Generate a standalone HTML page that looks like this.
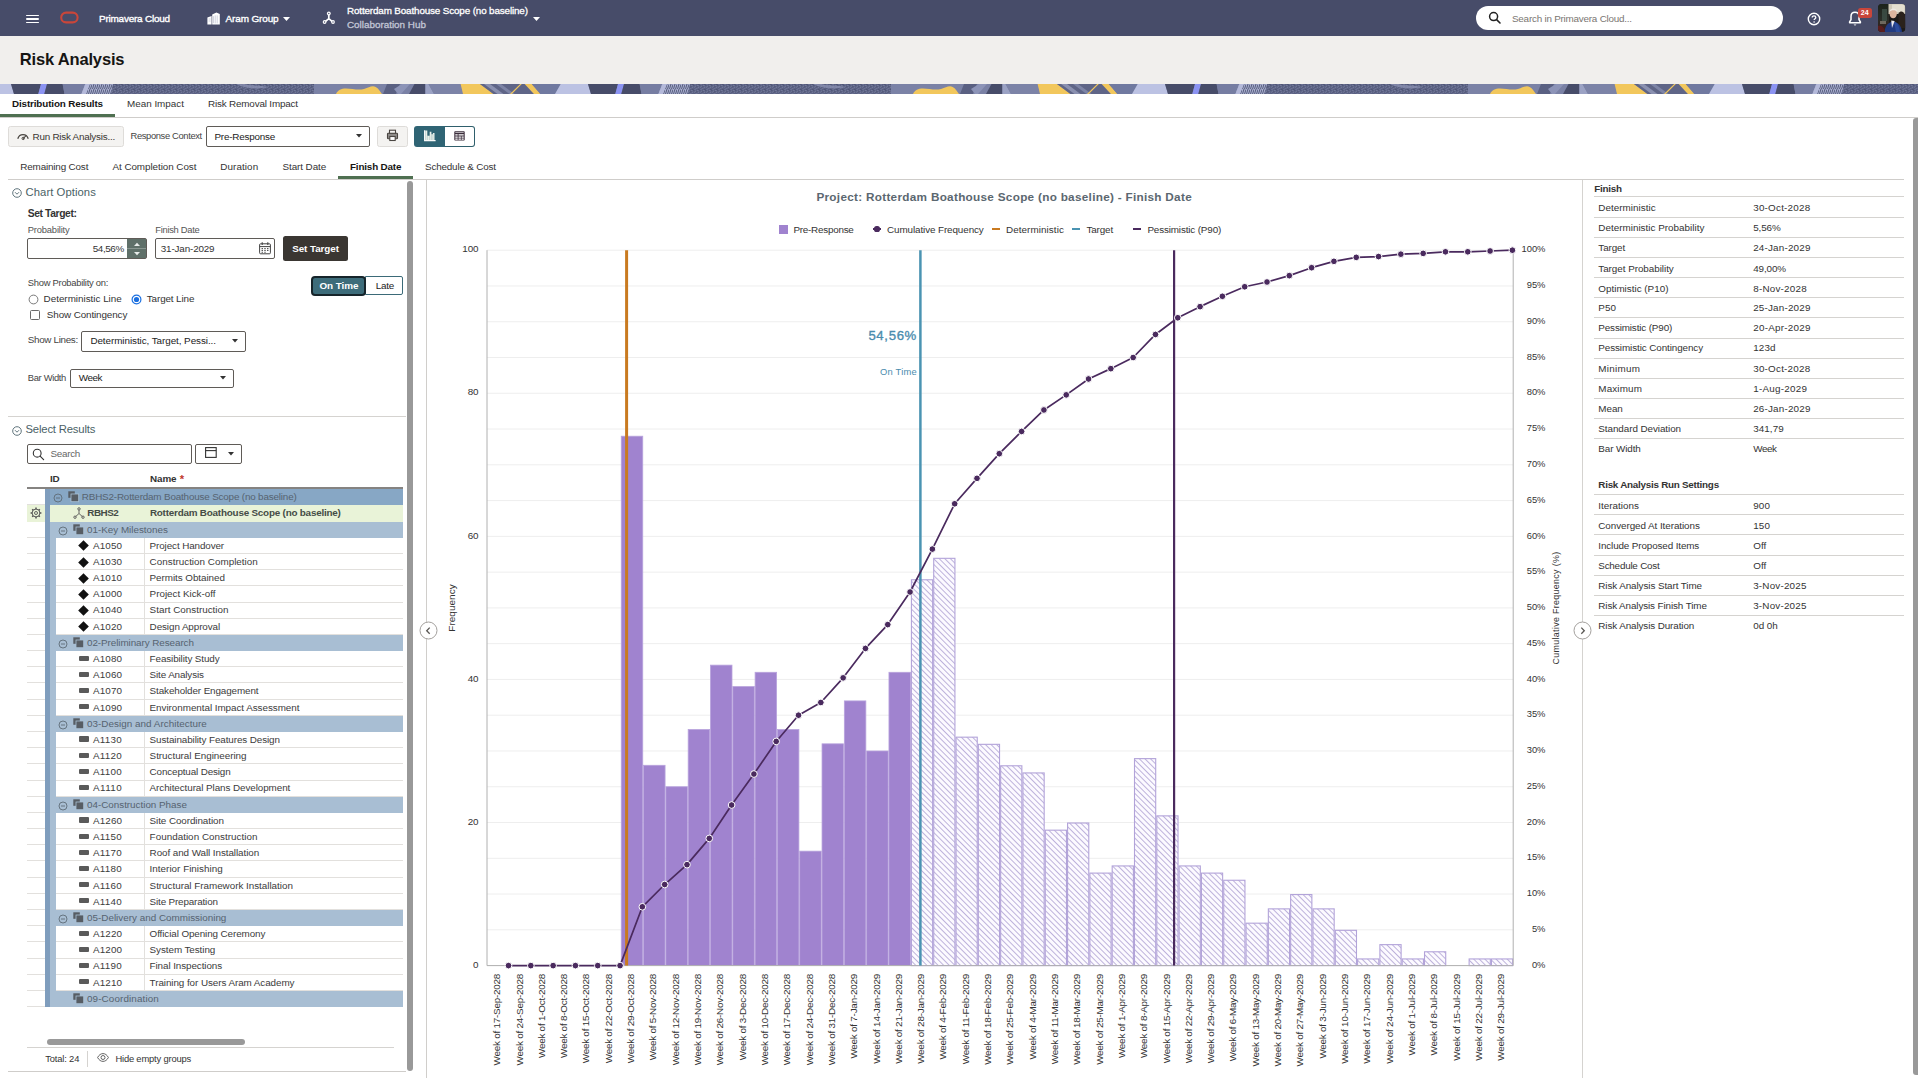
<!DOCTYPE html>
<html><head><meta charset="utf-8"><title>Risk Analysis</title>
<style>
html,body{margin:0;padding:0;}
body{width:1918px;height:1078px;overflow:hidden;background:#fff;font-family:"Liberation Sans",sans-serif;position:relative;}
.t{position:absolute;white-space:nowrap;display:block;}
.b{position:absolute;box-sizing:border-box;}
svg{position:absolute;overflow:visible;}
</style></head><body>
<div class="b" style="left:0.00px;top:0.00px;width:1918.00px;height:36.00px;background:#474c69;"></div>
<div class="b" style="left:26.00px;top:14.50px;width:12.50px;height:1.60px;background:#fff;border-radius:1px;"></div>
<div class="b" style="left:26.00px;top:18.20px;width:12.50px;height:1.60px;background:#fff;border-radius:1px;"></div>
<div class="b" style="left:26.00px;top:21.90px;width:12.50px;height:1.60px;background:#fff;border-radius:1px;"></div>
<svg style="left:58px;top:10px" width="24" height="16" viewBox="0 0 24 16"><rect x="3.2" y="2.6" width="16.4" height="9.8" rx="4.9" fill="none" stroke="#c9463a" stroke-width="2.1"/></svg>
<span class="t" style="left:99.00px;top:11.55px;font-size:9.96px;letter-spacing:-0.214px;color:#fff;line-height:14px;-webkit-text-stroke:0.35px #fff;">Primavera Cloud</span>
<svg style="left:206.500px;top:11.500px" width="13" height="13" viewBox="0 0 13 13"><path d="M0.400 12.400V5.600L4.600 4V12.400zM5.200 12.400V2.600L9.400 0.400L12.800 2V12.400z" fill="#fff"/><path d="M1.600 7h2M1.600 9h2M6.400 4.200v7M8.200 3.400v8M10.200 3.400v8" stroke="#b9bdd0" stroke-width="0.700"/></svg>
<span class="t" style="left:225.60px;top:11.55px;font-size:9.96px;letter-spacing:-0.127px;color:#fff;line-height:14px;-webkit-text-stroke:0.35px #fff;">Aram Group</span>
<svg style="left:283px;top:16.5px" width="7" height="4" viewBox="0 0 7 4"><path d="M0 0h7L3.5 4z" fill="#fff"/></svg>
<svg style="left:322px;top:10.500px" width="14" height="14" viewBox="0 0 14 14"><g fill="none" stroke="#fff" stroke-width="1.700" stroke-linecap="round"><path d="M6.800 3.500V7.600M6.800 7.600L3 10.800M6.800 7.600L10.600 10.800"/></g><circle cx="6.800" cy="2.500" r="1.900" fill="#fff"/><circle cx="2.600" cy="11" r="1.900" fill="#fff"/><circle cx="11" cy="11" r="1.900" fill="#fff"/><circle cx="2.600" cy="11" r="0.700" fill="#474c69"/><circle cx="11" cy="11" r="0.700" fill="#474c69"/><circle cx="6.800" cy="2.500" r="0.700" fill="#474c69"/></svg>
<span class="t" style="left:347.00px;top:4.35px;font-size:9.87px;letter-spacing:-0.142px;color:#fff;line-height:14px;-webkit-text-stroke:0.3px #fff;">Rotterdam Boathouse Scope (no baseline)</span>
<span class="t" style="left:347.00px;top:18.15px;font-size:9.87px;letter-spacing:-0.001px;color:#c3c6d6;line-height:14px;-webkit-text-stroke:0.3px #c3c6d6;">Collaboration Hub</span>
<svg style="left:533px;top:16.5px" width="7" height="4" viewBox="0 0 7 4"><path d="M0 0h7L3.5 4z" fill="#fff"/></svg>
<div class="b" style="left:1476.00px;top:6.00px;width:307.00px;height:24.00px;background:#fff;border-radius:12px;"></div>
<svg style="left:1488px;top:11px" width="14" height="14" viewBox="0 0 14 14"><circle cx="5.6" cy="5.6" r="4" fill="none" stroke="#222" stroke-width="1.5"/><path d="M8.6 8.6L12 12" stroke="#222" stroke-width="1.6" stroke-linecap="round"/></svg>
<span class="t" style="left:1512.00px;top:11.75px;font-size:9.87px;letter-spacing:-0.221px;color:#7a7672;line-height:14px;">Search in Primavera Cloud...</span>
<svg style="left:1806px;top:11px" width="16" height="16" viewBox="0 0 16 16"><circle cx="8" cy="8" r="5.7" fill="none" stroke="#fff" stroke-width="1.4"/><path d="M6.2 6.6c0-1.1 0.8-1.8 1.8-1.8s1.8 0.7 1.8 1.6c0 1.2-1.7 1.3-1.7 2.7" fill="none" stroke="#fff" stroke-width="1.3"/><circle cx="8.1" cy="11" r="0.8" fill="#fff"/></svg>
<svg style="left:1847px;top:10px" width="16" height="18" viewBox="0 0 16 18"><path d="M8 2.2c-2.5 0-4 1.8-4 4.2v3.2L2.6 12v0.8h10.8V12L12 9.600V6.400c0-2.400-1.500-4.200-4-4.200z" fill="none" stroke="#fff" stroke-width="1.5" stroke-linejoin="round"/><path d="M6.6 14.400c0.300 0.700 0.800 1 1.400 1s1.100-0.300 1.400-1z" fill="#fff"/></svg>
<div class="b" style="left:1858.00px;top:8.00px;width:13.50px;height:9.50px;background:#c9463a;border-radius:2.5px;"></div>
<span class="t" style="left:1860.74px;top:8.05px;font-size:7.05px;letter-spacing:0.042px;color:#fff;line-height:10px;font-weight:bold;">24</span>
<svg style="left:1878px;top:4px" width="27.400" height="28" viewBox="0 0 27.400 28"><defs><clipPath id="av"><rect width="27.400" height="28" rx="3.800"/></clipPath><linearGradient id="avl" x1="0" y1="0" x2="0" y2="1"><stop offset="0" stop-color="#1d241c"/><stop offset="0.550" stop-color="#2a2d27"/><stop offset="1" stop-color="#3a1a18"/></linearGradient></defs><g clip-path="url(#av)"><rect width="27.400" height="28" fill="#1c1a18"/><rect x="0" y="0" width="11" height="28" fill="url(#avl)"/><rect x="4" y="5" width="5" height="12" fill="#3f5148" opacity="0.800"/><rect x="2" y="17" width="6" height="3" fill="#8a8478" opacity="0.700"/><path d="M10.500 0H27.400V10H10.500z" fill="#cfc9b8"/><path d="M14 0.500H26.500V8H14z" fill="#e4dfd0"/><path d="M20.500 9c2-2.500 5-2 6 1c0.800 3 0.900 8 0.900 14h-7z" fill="#2a221c"/><ellipse cx="15.200" cy="9.600" rx="3.700" ry="4.700" fill="#dcb59e"/><path d="M11.300 8.200c0.300-4.600 7.400-5 8-0.400c-1.400-2-6.200-2.300-8 0.400z" fill="#eee9e2"/><path d="M6.500 28c0.500-6 3.500-9.500 8.200-10.500c5 0.500 8.800 4 9.300 10.500z" fill="#203a80"/><path d="M16 17.500c3 1 5 3 6 10.500h-4z" fill="#2a4b9c"/><path d="M13.200 16.600l0.800 7.400l2.600-7z" fill="#e9e9ee"/><path d="M0 22c3-1 6 0 7 6H0z" fill="#5a1d1d"/></g></svg>
<div class="b" style="left:0.00px;top:36.00px;width:1918.00px;height:48.00px;background:#f1efed;"></div>
<span class="t" style="left:19.80px;top:49.35px;font-size:16.54px;letter-spacing:-0.183px;color:#161513;line-height:22px;font-weight:bold;">Risk Analysis</span>
<svg style="left:0;top:84px" width="1918" height="10" viewBox="0 0 1918 10"><defs><pattern id="texd" width="6" height="5" patternUnits="userSpaceOnUse"><rect width="6" height="5" fill="#585e80"/><path d="M0 1.200l2.200 1M2.800 3.600l2.200-1.400M3.400 0.400l1.800 0.800M0.400 4.200l1.600-0.800M4.600 4.600l1.400-0.600" stroke="#8086a8" stroke-width="0.700"/><path d="M1.500 0l1 1.500M5 2.500l1 1.200" stroke="#3f4464" stroke-width="0.600"/></pattern><pattern id="texl" width="4" height="5" patternUnits="userSpaceOnUse"><rect width="4" height="5" fill="#a9aed0"/><path d="M0.500 5L2 0M2.500 5L4 0.500" stroke="#4d5373" stroke-width="0.900"/></pattern><g id="bn"><rect x="0" y="0" width="577" height="10" fill="#7a81a5"/><path d="M0 0H11L14 10H0z" fill="#bcc2e3"/><path d="M11 0H41L38.300 10H14z" fill="#474c69"/><path d="M41 0H47L44.300 10H38.300z" fill="#8b93f2"/><path d="M47 0H62.600L64.500 10H44.300z" fill="#474c69"/><path d="M62.600 0H85.300L81.400 10H64.500z" fill="#767da2"/><path d="M85.300 0H113L111 10H81.400z" fill="url(#texl)"/><path d="M85.300 0L81.400 10H86L90 0z" fill="#b4b9da"/><path d="M113 0H314V10H111z" fill="url(#texd)"/><path d="M236 0C244 4 256 6 268 3C262 1 250 2 244 0z" fill="#8c92b3" opacity="0.750"/><path d="M314 0H387V10H314z" fill="#7b82a6"/><path d="M336 10C338 6 341 4.500 346 4.500C352 4.500 358 6.500 364 5C368 4 370 2.300 373 2.300C377 2.300 379 6 382 10z" fill="#f2c75c"/><path d="M387 0H400L396 10H383z" fill="#5a6082"/><path d="M394 5L402 0H410L401 10H398z" fill="#8d94b8"/><path d="M414.500 0H425.400V10H409z" fill="#474c69"/><path d="M425.400 0H428.500L434 10H425.400z" fill="#9ba2c4"/><path d="M428.500 0H460.600L463 10H434z" fill="#7c83a7"/><path d="M460.600 0H480L493.500 10H463z" fill="#f2c75c"/><path d="M480 0H524.700L534 10H493.500z" fill="#5f6587"/><path d="M484 0H490L503.500 10H497.500z" fill="#8a90b0"/><path d="M496 0H501L514.500 10H509.500z" fill="#7d84a6"/><path d="M510 10L520.200 0H521.800L511.800 10z" fill="#f2c75c"/><path d="M524.700 0H531.800L540.400 10H534z" fill="#f2c75c"/><path d="M531.800 0H560.700L555 10H540.400z" fill="#7079a0"/><path d="M560.700 0H577V10H555z" fill="#bcc2e3"/></g></defs><use href="#bn" x="0"/><use href="#bn" x="577"/><use href="#bn" x="1154"/><use href="#bn" x="1731"/></svg>
<div class="b" style="left:0.00px;top:117.00px;width:1918.00px;height:1.00px;background:#cfcdca;"></div>
<div class="b" style="left:0.00px;top:114.00px;width:115.00px;height:3.00px;background:#4f7051;"></div>
<span class="t" style="left:12.00px;top:97.25px;font-size:9.87px;letter-spacing:-0.139px;color:#161513;line-height:14px;font-weight:bold;">Distribution Results</span>
<span class="t" style="left:127.00px;top:97.25px;font-size:9.87px;letter-spacing:-0.005px;color:#333;line-height:14px;">Mean Impact</span>
<span class="t" style="left:208.00px;top:97.25px;font-size:9.87px;letter-spacing:-0.171px;color:#333;line-height:14px;">Risk Removal Impact</span>
<div class="b" style="left:1913.00px;top:118.00px;width:5.00px;height:957.00px;background:#999;border-radius:3px 0 0 3px;"></div>
<div class="b" style="left:8.00px;top:126.00px;width:115.50px;height:20.50px;background:#f4f3f1;border:1px solid #dedcd9;border-radius:2.5px;"></div>
<svg style="left:17.300px;top:130.500px" width="12" height="10" viewBox="0 0 12 10"><path d="M1 7.300A5.200 5.200 0 0 1 11 7.300" fill="none" stroke="#4a4642" stroke-width="1.300" stroke-linecap="round"/><path d="M6.300 7.300L8.600 5.200" stroke="#4a4642" stroke-width="1.100" stroke-linecap="round"/><circle cx="6.200" cy="7.400" r="1.200" fill="none" stroke="#4a4642" stroke-width="1"/></svg>
<span class="t" style="left:32.50px;top:129.75px;font-size:9.87px;letter-spacing:-0.236px;color:#3a3632;line-height:14px;">Run Risk Analysis...</span>
<span class="t" style="left:130.50px;top:129.25px;font-size:9.40px;letter-spacing:-0.365px;color:#444;line-height:14px;">Response Context</span>
<div class="b" style="left:206.00px;top:126.00px;width:163.50px;height:20.50px;background:#fff;border:1px solid #5f5b57;border-radius:2px;"></div>
<span class="t" style="left:214.50px;top:130.25px;font-size:9.87px;letter-spacing:-0.216px;color:#222;line-height:14px;">Pre-Response</span>
<svg style="left:355.500px;top:134px" width="6" height="3.500" viewBox="0 0 6 3.500"><path d="M0 0h6L3 3.500z" fill="#333"/></svg>
<div class="b" style="left:377.20px;top:126.00px;width:30.40px;height:20.60px;background:#f4f3f1;border:1px solid #dedcd9;border-radius:2.5px;"></div>
<svg style="left:386px;top:129.300px" width="13" height="13" viewBox="0 0 13 13"><rect x="1.500" y="4.300" width="10" height="5.400" rx="0.800" fill="#8f8c89" stroke="#4a4642" stroke-width="1.100"/><rect x="3.500" y="1.200" width="6" height="3.100" fill="#f4f3f1" stroke="#4a4642" stroke-width="1.100"/><rect x="3.800" y="7.500" width="5.400" height="4" fill="#fff" stroke="#4a4642" stroke-width="1.100"/></svg>
<div class="b" style="left:414.00px;top:126.00px;width:30.70px;height:20.80px;background:#2f6474;border-radius:3px 0 0 3px;"></div>
<svg style="left:423.600px;top:129.800px" width="12" height="12" viewBox="0 0 12 12"><path d="M0.600 0.300V10.600H11.600" fill="none" stroke="#fff" stroke-width="1.100"/><path d="M1.200 0.600H3.300V5.800H5.700V1.700H7.400V4.200H8.900V3H10.500V10.200H1.200z" fill="#e9f0ea"/><path d="M3.300 5.800V10M5.700 5.800V10M7.400 4.200V10M8.900 4.200V10" stroke="#9fb9b8" stroke-width="0.500"/></svg>
<div class="b" style="left:444.70px;top:126.00px;width:30.20px;height:20.80px;background:#fff;border:1px solid #2f5f6c;border-left:none;border-radius:0 3px 3px 0;"></div>
<svg style="left:453.800px;top:130.700px" width="11" height="10" viewBox="0 0 11 10"><rect x="0.300" y="0.300" width="10.400" height="9.200" rx="0.800" fill="#3a2c3a"/><path d="M1.300 3.300h2.400v1.300h-2.400zM4.500 3.300h5.200v1.300h-5.200zM1.300 5.400h2.400v1.300h-2.400zM4.500 5.400h2.400v1.300h-2.400zM7.600 5.400h2.100v1.300h-2.100zM1.300 7.500h2.400v1.200h-2.400zM4.500 7.500h2.400v1.200h-2.400zM7.600 7.500h2.100v1.200h-2.100z" fill="#fff"/><path d="M1.300 1.500h8.400" stroke="#fff" stroke-width="0.600"/></svg>
<div class="b" style="left:8.00px;top:179.00px;width:1896.00px;height:1.00px;background:#cfcdca;"></div>
<div class="b" style="left:338.00px;top:176.20px;width:75.00px;height:3.00px;background:#4f7051;"></div>
<span class="t" style="left:20.30px;top:160.25px;font-size:9.87px;letter-spacing:-0.159px;color:#333;line-height:14px;">Remaining Cost</span>
<span class="t" style="left:112.50px;top:160.25px;font-size:9.87px;letter-spacing:-0.057px;color:#333;line-height:14px;">At Completion Cost</span>
<span class="t" style="left:220.30px;top:160.25px;font-size:9.87px;letter-spacing:0.087px;color:#333;line-height:14px;">Duration</span>
<span class="t" style="left:282.50px;top:160.25px;font-size:9.87px;letter-spacing:-0.074px;color:#333;line-height:14px;">Start Date</span>
<span class="t" style="left:350.00px;top:160.25px;font-size:9.87px;letter-spacing:-0.172px;color:#161513;line-height:14px;font-weight:bold;">Finish Date</span>
<span class="t" style="left:425.00px;top:160.25px;font-size:9.87px;letter-spacing:-0.168px;color:#333;line-height:14px;">Schedule &amp; Cost</span>
<div class="b" style="left:407.30px;top:181.00px;width:5.50px;height:890.00px;background:#999;border-radius:3px;"></div>
<div class="b" style="left:8.00px;top:1071.00px;width:398.00px;height:1.00px;background:#cfcdca;"></div>
<div class="b" style="left:426.30px;top:180.00px;width:1.00px;height:898.00px;background:#d0cecb;"></div>
<svg style="left:418.700px;top:621.400px" width="19" height="19" viewBox="0 0 19 19"><circle cx="9.500" cy="9.500" r="8.500" fill="#fff" stroke="#a3a09d" stroke-width="1"/><path d="M10.700 6.600L7.700 9.700L10.700 12.800" fill="none" stroke="#5a5754" stroke-width="1.300"/></svg>
<svg style="left:12.00px;top:187.70px" width="10" height="10" viewBox="0 0 10 10"><circle cx="5" cy="5" r="4.300" fill="none" stroke="#50666f" stroke-width="0.900"/><path d="M3 4.200L5 6.200L7 4.200" fill="none" stroke="#50666f" stroke-width="0.900"/></svg>
<span class="t" style="left:25.50px;top:184.00px;font-size:11.28px;letter-spacing:0.070px;color:#4a5f66;line-height:16px;">Chart Options</span>
<span class="t" style="left:27.80px;top:207.30px;font-size:10.34px;letter-spacing:-0.404px;color:#333;line-height:14px;font-weight:bold;">Set Target:</span>
<span class="t" style="left:27.80px;top:222.90px;font-size:9.40px;letter-spacing:-0.190px;color:#555;line-height:14px;">Probability</span>
<span class="t" style="left:155.30px;top:222.90px;font-size:9.40px;letter-spacing:-0.304px;color:#555;line-height:14px;">Finish Date</span>
<div class="b" style="left:27.00px;top:238.20px;width:120.00px;height:20.50px;background:#fff;border:1px solid #5f5b57;border-radius:2px;"></div>
<div class="b" style="left:126.50px;top:239.00px;width:19.70px;height:18.90px;background:#5f7069;"></div>
<div class="b" style="left:126.50px;top:248.00px;width:19.70px;height:1.00px;background:#8a9791;"></div>
<svg style="left:133.500px;top:241.500px" width="6" height="14" viewBox="0 0 6 14"><path d="M0 4L3 0.800L6 4z" fill="#e8ecea"/><path d="M0 10L3 13.200L6 10z" fill="#e8ecea"/></svg>
<span class="t" style="left:92.70px;top:241.60px;font-size:9.87px;letter-spacing:-0.379px;color:#333;line-height:14px;">54,56%</span>
<div class="b" style="left:155.00px;top:238.20px;width:120.00px;height:20.50px;background:#fff;border:1px solid #5f5b57;border-radius:2px;"></div>
<span class="t" style="left:160.80px;top:241.60px;font-size:9.87px;letter-spacing:-0.157px;color:#333;line-height:14px;">31-Jan-2029</span>
<svg style="left:259px;top:241.500px" width="12" height="12.500" viewBox="0 0 12 12.500"><rect x="0.600" y="1.800" width="10.800" height="10" rx="1" fill="none" stroke="#444" stroke-width="1"/><path d="M0.600 4.600h10.800" stroke="#444" stroke-width="1"/><path d="M3.200 0.300v2.600M8.800 0.300v2.600" stroke="#444" stroke-width="1.100"/><path d="M2.600 6.500h1.300M5.350 6.500h1.300M8.100 6.500h1.300M2.600 8.400h1.300M5.350 8.400h1.300M8.100 8.400h1.300M2.600 10.200h1.300M5.350 10.200h1.300" stroke="#444" stroke-width="1.100"/></svg>
<div class="b" style="left:283.10px;top:236.10px;width:65.00px;height:24.70px;background:#3a3632;border-radius:2.500px;"></div>
<span class="t" style="left:292.20px;top:242.00px;font-size:9.87px;letter-spacing:-0.073px;color:#fff;line-height:14px;font-weight:bold;">Set Target</span>
<span class="t" style="left:27.80px;top:275.90px;font-size:9.40px;letter-spacing:-0.260px;color:#444;line-height:14px;">Show Probability on:</span>
<div class="b" style="left:365.00px;top:275.70px;width:38.00px;height:19.80px;background:#fff;border:1px solid #3b6a78;border-radius:0 2px 2px 0;"></div>
<div class="b" style="left:310.70px;top:275.60px;width:55.20px;height:20.00px;background:#3d6c7a;border:2px solid #16242a;border-radius:4px;"></div>
<span class="t" style="left:319.50px;top:278.60px;font-size:9.87px;letter-spacing:-0.058px;color:#fff;line-height:14px;font-weight:bold;">On Time</span>
<span class="t" style="left:375.80px;top:278.60px;font-size:9.87px;letter-spacing:-0.253px;color:#222;line-height:14px;">Late</span>
<svg style="left:28.300px;top:293.500px" width="11" height="11" viewBox="0 0 11 11"><circle cx="5.500" cy="5.500" r="4.400" fill="#fff" stroke="#6a6a6a" stroke-width="0.900"/></svg>
<span class="t" style="left:43.60px;top:292.30px;font-size:9.87px;letter-spacing:-0.013px;color:#333;line-height:14px;">Deterministic Line</span>
<svg style="left:131.400px;top:293.500px" width="11" height="11" viewBox="0 0 11 11"><circle cx="5.500" cy="5.500" r="4.400" fill="#fff" stroke="#1a6fe0" stroke-width="1.200"/><circle cx="5.500" cy="5.500" r="2.600" fill="#1a6fe0"/></svg>
<span class="t" style="left:146.80px;top:292.30px;font-size:9.87px;letter-spacing:-0.121px;color:#333;line-height:14px;">Target Line</span>
<div class="b" style="left:30.10px;top:310.40px;width:9.60px;height:9.40px;background:#fff;border:1px solid #6a6a6a;border-radius:1.500px;"></div>
<span class="t" style="left:46.80px;top:308.30px;font-size:9.87px;letter-spacing:-0.113px;color:#333;line-height:14px;">Show Contingency</span>
<span class="t" style="left:27.80px;top:333.30px;font-size:9.87px;letter-spacing:-0.334px;color:#444;line-height:14px;">Show Lines:</span>
<div class="b" style="left:81.30px;top:331.40px;width:164.40px;height:20.20px;background:#fff;border:1px solid #5f5b57;border-radius:2px;"></div>
<span class="t" style="left:90.40px;top:334.00px;font-size:9.87px;letter-spacing:-0.062px;color:#222;line-height:14px;">Deterministic, Target, Pessi...</span>
<svg style="left:232px;top:339px" width="6" height="3.500" viewBox="0 0 6 3.500"><path d="M0 0h6L3 3.500z" fill="#333"/></svg>
<span class="t" style="left:27.80px;top:370.70px;font-size:9.40px;letter-spacing:-0.341px;color:#444;line-height:14px;">Bar Width</span>
<div class="b" style="left:70.10px;top:368.60px;width:163.70px;height:19.20px;background:#fff;border:1px solid #5f5b57;border-radius:2px;"></div>
<span class="t" style="left:78.70px;top:371.00px;font-size:9.87px;letter-spacing:-0.413px;color:#222;line-height:14px;">Week</span>
<svg style="left:220.300px;top:376px" width="6" height="3.500" viewBox="0 0 6 3.500"><path d="M0 0h6L3 3.500z" fill="#333"/></svg>
<div class="b" style="left:8.00px;top:416.00px;width:398.00px;height:1.00px;background:#d5d3d0;"></div>
<svg style="left:12.00px;top:425.70px" width="10" height="10" viewBox="0 0 10 10"><circle cx="5" cy="5" r="4.300" fill="none" stroke="#50666f" stroke-width="0.900"/><path d="M3 4.200L5 6.200L7 4.200" fill="none" stroke="#50666f" stroke-width="0.900"/></svg>
<span class="t" style="left:25.50px;top:421.10px;font-size:11.28px;letter-spacing:-0.164px;color:#4a5f66;line-height:16px;">Select Results</span>
<div class="b" style="left:27.00px;top:444.30px;width:164.70px;height:19.40px;background:#fff;border:1px solid #5f5b57;border-radius:2px;"></div>
<svg style="left:31.500px;top:447.500px" width="13" height="13" viewBox="0 0 13 13"><circle cx="5.200" cy="5.200" r="3.900" fill="none" stroke="#333" stroke-width="1.100"/><path d="M8.100 8.100L11.600 11.600" stroke="#333" stroke-width="1.200" stroke-linecap="round"/></svg>
<span class="t" style="left:50.60px;top:447.30px;font-size:9.87px;letter-spacing:-0.312px;color:#666;line-height:14px;">Search</span>
<div class="b" style="left:195.30px;top:444.30px;width:46.50px;height:19.40px;background:#fff;border:1px solid #5f5b57;border-radius:2px;"></div>
<svg style="left:205px;top:447px" width="12" height="11" viewBox="0 0 12 11"><rect x="0.600" y="0.600" width="10.600" height="9.800" fill="none" stroke="#333" stroke-width="1.100"/><path d="M0.600 3.600h10.600" stroke="#333" stroke-width="1.100"/></svg>
<svg style="left:227.800px;top:452px" width="6" height="3.500" viewBox="0 0 6 3.500"><path d="M0 0h6L3 3.500z" fill="#333"/></svg>
<span class="t" style="left:49.90px;top:472.20px;font-size:9.87px;letter-spacing:-0.035px;color:#333;line-height:14px;font-weight:bold;">ID</span>
<span class="t" style="left:149.90px;top:472.20px;font-size:9.87px;letter-spacing:-0.046px;color:#333;line-height:14px;font-weight:bold;">Name</span>
<span class="t" style="left:179.70px;top:472.00px;font-size:11.28px;letter-spacing:0.110px;color:#c0392b;line-height:14px;font-weight:bold;">*</span>
<div class="b" style="left:27.00px;top:487.00px;width:376.00px;height:2.40px;background:#858381;"></div>
<div class="b" style="left:45.20px;top:489.30px;width:5.00px;height:517.76px;background:#7f9dbd;"></div>
<div class="b" style="left:50.20px;top:521.66px;width:5.80px;height:485.40px;background:#a8bed3;"></div>
<div class="b" style="left:27.00px;top:504.48px;width:18.20px;height:1.00px;background:#e2e0dd;"></div>
<div class="b" style="left:45.20px;top:489.30px;width:357.80px;height:16.18px;background:#87a7c5;"></div>
<div class="b" style="left:45.20px;top:489.30px;width:5.00px;height:16.18px;background:#7f9dbd;"></div>
<svg style="left:52.70px;top:493.19px" width="10" height="10" viewBox="0 0 10 10"><circle cx="5" cy="5" r="4" fill="none" stroke="#5f6c77" stroke-width="0.900"/><path d="M3 5h4" stroke="#5f6c77" stroke-width="0.900"/></svg>
<svg style="left:68.00px;top:491.39px" width="11" height="11" viewBox="0 0 11 11"><rect x="0.300" y="0.300" width="6.500" height="6.500" fill="#575d64"/><rect x="3" y="3" width="7.700" height="7.700" fill="#575d64" stroke="#a9c0d4" stroke-width="0.800"/></svg>
<span class="t" style="left:81.80px;top:490.19px;font-size:9.87px;letter-spacing:-0.172px;color:#566370;line-height:14px;">RBHS2-Rotterdam Boathouse Scope (no baseline)</span>
<div class="b" style="left:27.00px;top:520.66px;width:18.20px;height:1.00px;background:#e2e0dd;"></div>
<div class="b" style="left:27.00px;top:505.48px;width:18.20px;height:16.18px;background:#e9f3d8;"></div>
<div class="b" style="left:50.20px;top:505.48px;width:352.80px;height:16.18px;background:#e9f3d8;"></div>
<svg style="left:30px;top:507.37px" width="12" height="12" viewBox="0 0 12 12"><circle cx="6" cy="6" r="3.900" fill="none" stroke="#555" stroke-width="1"/><circle cx="6" cy="6" r="1.500" fill="none" stroke="#555" stroke-width="0.900"/><g stroke="#555" stroke-width="1.500"><path d="M6 0.600v1.500M6 9.900v1.500M0.600 6h1.500M9.900 6h1.500M2.200 2.200l1 1M8.800 8.800l1 1M2.200 9.800l1-1M8.800 3.200l1-1"/></g></svg>
<svg style="left:72.500px;top:507.07px" width="12" height="12" viewBox="0 0 12 12"><g fill="none" stroke="#555" stroke-width="0.900"><path d="M6 3V6.500M6 6.500L2.600 9.600M6 6.500L9.400 9.600"/><circle cx="6" cy="1.900" r="1.200"/><circle cx="2" cy="10.200" r="1.200"/><circle cx="10" cy="10.200" r="1.200"/></g></svg>
<span class="t" style="left:87.30px;top:506.37px;font-size:9.87px;letter-spacing:-0.471px;color:#454c46;line-height:14px;font-weight:bold;">RBHS2</span>
<span class="t" style="left:149.90px;top:506.37px;font-size:9.87px;letter-spacing:-0.207px;color:#454c46;line-height:14px;font-weight:bold;">Rotterdam Boathouse Scope (no baseline)</span>
<div class="b" style="left:27.00px;top:536.84px;width:18.20px;height:1.00px;background:#e2e0dd;"></div>
<div class="b" style="left:50.20px;top:521.66px;width:352.80px;height:16.18px;background:#a8bed3;"></div>
<svg style="left:58.10px;top:525.55px" width="10" height="10" viewBox="0 0 10 10"><circle cx="5" cy="5" r="4" fill="none" stroke="#5f6c77" stroke-width="0.900"/><path d="M3 5h4" stroke="#5f6c77" stroke-width="0.900"/></svg>
<svg style="left:73.00px;top:523.75px" width="11" height="11" viewBox="0 0 11 11"><rect x="0.300" y="0.300" width="6.500" height="6.500" fill="#575d64"/><rect x="3" y="3" width="7.700" height="7.700" fill="#575d64" stroke="#a9c0d4" stroke-width="0.800"/></svg>
<span class="t" style="left:87.00px;top:522.55px;font-size:9.87px;letter-spacing:-0.011px;color:#566370;line-height:14px;">01-Key Milestones</span>
<div class="b" style="left:27.00px;top:553.02px;width:18.20px;height:1.00px;background:#e2e0dd;"></div>
<div class="b" style="left:56.00px;top:553.02px;width:347.00px;height:1.00px;background:#e2e0dd;"></div>
<div class="b" style="left:144.00px;top:537.84px;width:1.00px;height:16.18px;background:#e2e0dd;"></div>
<svg style="left:78.400px;top:540.33px" width="11" height="11" viewBox="0 0 11 11"><path d="M5.500 0.200L10.800 5.500L5.500 10.800L0.200 5.500z" fill="#111"/></svg>
<span class="t" style="left:93.00px;top:538.73px;font-size:9.87px;letter-spacing:0.112px;color:#3b3b3b;line-height:14px;">A1050</span>
<span class="t" style="left:149.60px;top:538.73px;font-size:9.87px;letter-spacing:-0.110px;color:#3b3b3b;line-height:14px;">Project Handover</span>
<div class="b" style="left:27.00px;top:569.20px;width:18.20px;height:1.00px;background:#e2e0dd;"></div>
<div class="b" style="left:56.00px;top:569.20px;width:347.00px;height:1.00px;background:#e2e0dd;"></div>
<div class="b" style="left:144.00px;top:554.02px;width:1.00px;height:16.18px;background:#e2e0dd;"></div>
<svg style="left:78.400px;top:556.51px" width="11" height="11" viewBox="0 0 11 11"><path d="M5.500 0.200L10.800 5.500L5.500 10.800L0.200 5.500z" fill="#111"/></svg>
<span class="t" style="left:93.00px;top:554.91px;font-size:9.87px;letter-spacing:0.112px;color:#3b3b3b;line-height:14px;">A1030</span>
<span class="t" style="left:149.60px;top:554.91px;font-size:9.87px;letter-spacing:0.010px;color:#3b3b3b;line-height:14px;">Construction Completion</span>
<div class="b" style="left:27.00px;top:585.38px;width:18.20px;height:1.00px;background:#e2e0dd;"></div>
<div class="b" style="left:56.00px;top:585.38px;width:347.00px;height:1.00px;background:#e2e0dd;"></div>
<div class="b" style="left:144.00px;top:570.20px;width:1.00px;height:16.18px;background:#e2e0dd;"></div>
<svg style="left:78.400px;top:572.69px" width="11" height="11" viewBox="0 0 11 11"><path d="M5.500 0.200L10.800 5.500L5.500 10.800L0.200 5.500z" fill="#111"/></svg>
<span class="t" style="left:93.00px;top:571.09px;font-size:9.87px;letter-spacing:0.112px;color:#3b3b3b;line-height:14px;">A1010</span>
<span class="t" style="left:149.60px;top:571.09px;font-size:9.87px;letter-spacing:-0.060px;color:#3b3b3b;line-height:14px;">Permits Obtained</span>
<div class="b" style="left:27.00px;top:601.56px;width:18.20px;height:1.00px;background:#e2e0dd;"></div>
<div class="b" style="left:56.00px;top:601.56px;width:347.00px;height:1.00px;background:#e2e0dd;"></div>
<div class="b" style="left:144.00px;top:586.38px;width:1.00px;height:16.18px;background:#e2e0dd;"></div>
<svg style="left:78.400px;top:588.87px" width="11" height="11" viewBox="0 0 11 11"><path d="M5.500 0.200L10.800 5.500L5.500 10.800L0.200 5.500z" fill="#111"/></svg>
<span class="t" style="left:93.00px;top:587.27px;font-size:9.87px;letter-spacing:0.112px;color:#3b3b3b;line-height:14px;">A1000</span>
<span class="t" style="left:149.60px;top:587.27px;font-size:9.87px;letter-spacing:-0.012px;color:#3b3b3b;line-height:14px;">Project Kick-off</span>
<div class="b" style="left:27.00px;top:617.74px;width:18.20px;height:1.00px;background:#e2e0dd;"></div>
<div class="b" style="left:56.00px;top:617.74px;width:347.00px;height:1.00px;background:#e2e0dd;"></div>
<div class="b" style="left:144.00px;top:602.56px;width:1.00px;height:16.18px;background:#e2e0dd;"></div>
<svg style="left:78.400px;top:605.05px" width="11" height="11" viewBox="0 0 11 11"><path d="M5.500 0.200L10.800 5.500L5.500 10.800L0.200 5.500z" fill="#111"/></svg>
<span class="t" style="left:93.00px;top:603.45px;font-size:9.87px;letter-spacing:0.112px;color:#3b3b3b;line-height:14px;">A1040</span>
<span class="t" style="left:149.60px;top:603.45px;font-size:9.87px;letter-spacing:0.000px;color:#3b3b3b;line-height:14px;">Start Construction</span>
<div class="b" style="left:27.00px;top:633.92px;width:18.20px;height:1.00px;background:#e2e0dd;"></div>
<div class="b" style="left:56.00px;top:633.92px;width:347.00px;height:1.00px;background:#e2e0dd;"></div>
<div class="b" style="left:144.00px;top:618.74px;width:1.00px;height:16.18px;background:#e2e0dd;"></div>
<svg style="left:78.400px;top:621.23px" width="11" height="11" viewBox="0 0 11 11"><path d="M5.500 0.200L10.800 5.500L5.500 10.800L0.200 5.500z" fill="#111"/></svg>
<span class="t" style="left:93.00px;top:619.63px;font-size:9.87px;letter-spacing:0.112px;color:#3b3b3b;line-height:14px;">A1020</span>
<span class="t" style="left:149.60px;top:619.63px;font-size:9.87px;letter-spacing:-0.085px;color:#3b3b3b;line-height:14px;">Design Approval</span>
<div class="b" style="left:27.00px;top:650.10px;width:18.20px;height:1.00px;background:#e2e0dd;"></div>
<div class="b" style="left:50.20px;top:634.92px;width:352.80px;height:16.18px;background:#a8bed3;"></div>
<svg style="left:58.10px;top:638.81px" width="10" height="10" viewBox="0 0 10 10"><circle cx="5" cy="5" r="4" fill="none" stroke="#5f6c77" stroke-width="0.900"/><path d="M3 5h4" stroke="#5f6c77" stroke-width="0.900"/></svg>
<svg style="left:73.00px;top:637.01px" width="11" height="11" viewBox="0 0 11 11"><rect x="0.300" y="0.300" width="6.500" height="6.500" fill="#575d64"/><rect x="3" y="3" width="7.700" height="7.700" fill="#575d64" stroke="#a9c0d4" stroke-width="0.800"/></svg>
<span class="t" style="left:87.00px;top:635.81px;font-size:9.87px;letter-spacing:-0.070px;color:#566370;line-height:14px;">02-Preliminary Research</span>
<div class="b" style="left:27.00px;top:666.28px;width:18.20px;height:1.00px;background:#e2e0dd;"></div>
<div class="b" style="left:56.00px;top:666.28px;width:347.00px;height:1.00px;background:#e2e0dd;"></div>
<div class="b" style="left:144.00px;top:651.10px;width:1.00px;height:16.18px;background:#e2e0dd;"></div>
<div class="b" style="left:78.70px;top:655.59px;width:10.40px;height:5.20px;background:#5a5a5a;border-radius:1px;"></div>
<span class="t" style="left:93.00px;top:651.99px;font-size:9.87px;letter-spacing:0.112px;color:#3b3b3b;line-height:14px;">A1080</span>
<span class="t" style="left:149.60px;top:651.99px;font-size:9.87px;letter-spacing:-0.110px;color:#3b3b3b;line-height:14px;">Feasibility Study</span>
<div class="b" style="left:27.00px;top:682.46px;width:18.20px;height:1.00px;background:#e2e0dd;"></div>
<div class="b" style="left:56.00px;top:682.46px;width:347.00px;height:1.00px;background:#e2e0dd;"></div>
<div class="b" style="left:144.00px;top:667.28px;width:1.00px;height:16.18px;background:#e2e0dd;"></div>
<div class="b" style="left:78.70px;top:671.77px;width:10.40px;height:5.20px;background:#5a5a5a;border-radius:1px;"></div>
<span class="t" style="left:93.00px;top:668.17px;font-size:9.87px;letter-spacing:0.112px;color:#3b3b3b;line-height:14px;">A1060</span>
<span class="t" style="left:149.60px;top:668.17px;font-size:9.87px;letter-spacing:-0.128px;color:#3b3b3b;line-height:14px;">Site Analysis</span>
<div class="b" style="left:27.00px;top:698.64px;width:18.20px;height:1.00px;background:#e2e0dd;"></div>
<div class="b" style="left:56.00px;top:698.64px;width:347.00px;height:1.00px;background:#e2e0dd;"></div>
<div class="b" style="left:144.00px;top:683.46px;width:1.00px;height:16.18px;background:#e2e0dd;"></div>
<div class="b" style="left:78.70px;top:687.95px;width:10.40px;height:5.20px;background:#5a5a5a;border-radius:1px;"></div>
<span class="t" style="left:93.00px;top:684.35px;font-size:9.87px;letter-spacing:0.112px;color:#3b3b3b;line-height:14px;">A1070</span>
<span class="t" style="left:149.60px;top:684.35px;font-size:9.87px;letter-spacing:-0.109px;color:#3b3b3b;line-height:14px;">Stakeholder Engagement</span>
<div class="b" style="left:27.00px;top:714.82px;width:18.20px;height:1.00px;background:#e2e0dd;"></div>
<div class="b" style="left:56.00px;top:714.82px;width:347.00px;height:1.00px;background:#e2e0dd;"></div>
<div class="b" style="left:144.00px;top:699.64px;width:1.00px;height:16.18px;background:#e2e0dd;"></div>
<div class="b" style="left:78.70px;top:704.13px;width:10.40px;height:5.20px;background:#5a5a5a;border-radius:1px;"></div>
<span class="t" style="left:93.00px;top:700.53px;font-size:9.87px;letter-spacing:0.112px;color:#3b3b3b;line-height:14px;">A1090</span>
<span class="t" style="left:149.60px;top:700.53px;font-size:9.87px;letter-spacing:-0.045px;color:#3b3b3b;line-height:14px;">Environmental Impact Assessment</span>
<div class="b" style="left:27.00px;top:731.00px;width:18.20px;height:1.00px;background:#e2e0dd;"></div>
<div class="b" style="left:50.20px;top:715.82px;width:352.80px;height:16.18px;background:#a8bed3;"></div>
<svg style="left:58.10px;top:719.71px" width="10" height="10" viewBox="0 0 10 10"><circle cx="5" cy="5" r="4" fill="none" stroke="#5f6c77" stroke-width="0.900"/><path d="M3 5h4" stroke="#5f6c77" stroke-width="0.900"/></svg>
<svg style="left:73.00px;top:717.91px" width="11" height="11" viewBox="0 0 11 11"><rect x="0.300" y="0.300" width="6.500" height="6.500" fill="#575d64"/><rect x="3" y="3" width="7.700" height="7.700" fill="#575d64" stroke="#a9c0d4" stroke-width="0.800"/></svg>
<span class="t" style="left:87.00px;top:716.71px;font-size:9.87px;letter-spacing:0.036px;color:#566370;line-height:14px;">03-Design and Architecture</span>
<div class="b" style="left:27.00px;top:747.18px;width:18.20px;height:1.00px;background:#e2e0dd;"></div>
<div class="b" style="left:56.00px;top:747.18px;width:347.00px;height:1.00px;background:#e2e0dd;"></div>
<div class="b" style="left:144.00px;top:732.00px;width:1.00px;height:16.18px;background:#e2e0dd;"></div>
<div class="b" style="left:78.70px;top:736.49px;width:10.40px;height:5.20px;background:#5a5a5a;border-radius:1px;"></div>
<span class="t" style="left:93.00px;top:732.89px;font-size:9.87px;letter-spacing:0.258px;color:#3b3b3b;line-height:14px;">A1130</span>
<span class="t" style="left:149.60px;top:732.89px;font-size:9.87px;letter-spacing:-0.097px;color:#3b3b3b;line-height:14px;">Sustainability Features Design</span>
<div class="b" style="left:27.00px;top:763.36px;width:18.20px;height:1.00px;background:#e2e0dd;"></div>
<div class="b" style="left:56.00px;top:763.36px;width:347.00px;height:1.00px;background:#e2e0dd;"></div>
<div class="b" style="left:144.00px;top:748.18px;width:1.00px;height:16.18px;background:#e2e0dd;"></div>
<div class="b" style="left:78.70px;top:752.67px;width:10.40px;height:5.20px;background:#5a5a5a;border-radius:1px;"></div>
<span class="t" style="left:93.00px;top:749.07px;font-size:9.87px;letter-spacing:0.258px;color:#3b3b3b;line-height:14px;">A1120</span>
<span class="t" style="left:149.60px;top:749.07px;font-size:9.87px;letter-spacing:-0.030px;color:#3b3b3b;line-height:14px;">Structural Engineering</span>
<div class="b" style="left:27.00px;top:779.54px;width:18.20px;height:1.00px;background:#e2e0dd;"></div>
<div class="b" style="left:56.00px;top:779.54px;width:347.00px;height:1.00px;background:#e2e0dd;"></div>
<div class="b" style="left:144.00px;top:764.36px;width:1.00px;height:16.18px;background:#e2e0dd;"></div>
<div class="b" style="left:78.70px;top:768.85px;width:10.40px;height:5.20px;background:#5a5a5a;border-radius:1px;"></div>
<span class="t" style="left:93.00px;top:765.25px;font-size:9.87px;letter-spacing:0.258px;color:#3b3b3b;line-height:14px;">A1100</span>
<span class="t" style="left:149.60px;top:765.25px;font-size:9.87px;letter-spacing:-0.141px;color:#3b3b3b;line-height:14px;">Conceptual Design</span>
<div class="b" style="left:27.00px;top:795.72px;width:18.20px;height:1.00px;background:#e2e0dd;"></div>
<div class="b" style="left:56.00px;top:795.72px;width:347.00px;height:1.00px;background:#e2e0dd;"></div>
<div class="b" style="left:144.00px;top:780.54px;width:1.00px;height:16.18px;background:#e2e0dd;"></div>
<div class="b" style="left:78.70px;top:785.03px;width:10.40px;height:5.20px;background:#5a5a5a;border-radius:1px;"></div>
<span class="t" style="left:93.00px;top:781.43px;font-size:9.87px;letter-spacing:0.405px;color:#3b3b3b;line-height:14px;">A1110</span>
<span class="t" style="left:149.60px;top:781.43px;font-size:9.87px;letter-spacing:-0.077px;color:#3b3b3b;line-height:14px;">Architectural Plans Development</span>
<div class="b" style="left:27.00px;top:811.90px;width:18.20px;height:1.00px;background:#e2e0dd;"></div>
<div class="b" style="left:50.20px;top:796.72px;width:352.80px;height:16.18px;background:#a8bed3;"></div>
<svg style="left:58.10px;top:800.61px" width="10" height="10" viewBox="0 0 10 10"><circle cx="5" cy="5" r="4" fill="none" stroke="#5f6c77" stroke-width="0.900"/><path d="M3 5h4" stroke="#5f6c77" stroke-width="0.900"/></svg>
<svg style="left:73.00px;top:798.81px" width="11" height="11" viewBox="0 0 11 11"><rect x="0.300" y="0.300" width="6.500" height="6.500" fill="#575d64"/><rect x="3" y="3" width="7.700" height="7.700" fill="#575d64" stroke="#a9c0d4" stroke-width="0.800"/></svg>
<span class="t" style="left:87.00px;top:797.61px;font-size:9.87px;letter-spacing:-0.019px;color:#566370;line-height:14px;">04-Construction Phase</span>
<div class="b" style="left:27.00px;top:828.08px;width:18.20px;height:1.00px;background:#e2e0dd;"></div>
<div class="b" style="left:56.00px;top:828.08px;width:347.00px;height:1.00px;background:#e2e0dd;"></div>
<div class="b" style="left:144.00px;top:812.90px;width:1.00px;height:16.18px;background:#e2e0dd;"></div>
<div class="b" style="left:78.70px;top:817.39px;width:10.40px;height:5.20px;background:#5a5a5a;border-radius:1px;"></div>
<span class="t" style="left:93.00px;top:813.79px;font-size:9.87px;letter-spacing:0.112px;color:#3b3b3b;line-height:14px;">A1260</span>
<span class="t" style="left:149.60px;top:813.79px;font-size:9.87px;letter-spacing:-0.083px;color:#3b3b3b;line-height:14px;">Site Coordination</span>
<div class="b" style="left:27.00px;top:844.26px;width:18.20px;height:1.00px;background:#e2e0dd;"></div>
<div class="b" style="left:56.00px;top:844.26px;width:347.00px;height:1.00px;background:#e2e0dd;"></div>
<div class="b" style="left:144.00px;top:829.08px;width:1.00px;height:16.18px;background:#e2e0dd;"></div>
<div class="b" style="left:78.70px;top:833.57px;width:10.40px;height:5.20px;background:#5a5a5a;border-radius:1px;"></div>
<span class="t" style="left:93.00px;top:829.97px;font-size:9.87px;letter-spacing:0.258px;color:#3b3b3b;line-height:14px;">A1150</span>
<span class="t" style="left:149.60px;top:829.97px;font-size:9.87px;letter-spacing:0.020px;color:#3b3b3b;line-height:14px;">Foundation Construction</span>
<div class="b" style="left:27.00px;top:860.44px;width:18.20px;height:1.00px;background:#e2e0dd;"></div>
<div class="b" style="left:56.00px;top:860.44px;width:347.00px;height:1.00px;background:#e2e0dd;"></div>
<div class="b" style="left:144.00px;top:845.26px;width:1.00px;height:16.18px;background:#e2e0dd;"></div>
<div class="b" style="left:78.70px;top:849.75px;width:10.40px;height:5.20px;background:#5a5a5a;border-radius:1px;"></div>
<span class="t" style="left:93.00px;top:846.15px;font-size:9.87px;letter-spacing:0.258px;color:#3b3b3b;line-height:14px;">A1170</span>
<span class="t" style="left:149.60px;top:846.15px;font-size:9.87px;letter-spacing:-0.075px;color:#3b3b3b;line-height:14px;">Roof and Wall Installation</span>
<div class="b" style="left:27.00px;top:876.62px;width:18.20px;height:1.00px;background:#e2e0dd;"></div>
<div class="b" style="left:56.00px;top:876.62px;width:347.00px;height:1.00px;background:#e2e0dd;"></div>
<div class="b" style="left:144.00px;top:861.44px;width:1.00px;height:16.18px;background:#e2e0dd;"></div>
<div class="b" style="left:78.70px;top:865.93px;width:10.40px;height:5.20px;background:#5a5a5a;border-radius:1px;"></div>
<span class="t" style="left:93.00px;top:862.33px;font-size:9.87px;letter-spacing:0.258px;color:#3b3b3b;line-height:14px;">A1180</span>
<span class="t" style="left:149.60px;top:862.33px;font-size:9.87px;letter-spacing:0.013px;color:#3b3b3b;line-height:14px;">Interior Finishing</span>
<div class="b" style="left:27.00px;top:892.80px;width:18.20px;height:1.00px;background:#e2e0dd;"></div>
<div class="b" style="left:56.00px;top:892.80px;width:347.00px;height:1.00px;background:#e2e0dd;"></div>
<div class="b" style="left:144.00px;top:877.62px;width:1.00px;height:16.18px;background:#e2e0dd;"></div>
<div class="b" style="left:78.70px;top:882.11px;width:10.40px;height:5.20px;background:#5a5a5a;border-radius:1px;"></div>
<span class="t" style="left:93.00px;top:878.51px;font-size:9.87px;letter-spacing:0.258px;color:#3b3b3b;line-height:14px;">A1160</span>
<span class="t" style="left:149.60px;top:878.51px;font-size:9.87px;letter-spacing:-0.026px;color:#3b3b3b;line-height:14px;">Structural Framework Installation</span>
<div class="b" style="left:27.00px;top:908.98px;width:18.20px;height:1.00px;background:#e2e0dd;"></div>
<div class="b" style="left:56.00px;top:908.98px;width:347.00px;height:1.00px;background:#e2e0dd;"></div>
<div class="b" style="left:144.00px;top:893.80px;width:1.00px;height:16.18px;background:#e2e0dd;"></div>
<div class="b" style="left:78.70px;top:898.29px;width:10.40px;height:5.20px;background:#5a5a5a;border-radius:1px;"></div>
<span class="t" style="left:93.00px;top:894.69px;font-size:9.87px;letter-spacing:0.258px;color:#3b3b3b;line-height:14px;">A1140</span>
<span class="t" style="left:149.60px;top:894.69px;font-size:9.87px;letter-spacing:-0.155px;color:#3b3b3b;line-height:14px;">Site Preparation</span>
<div class="b" style="left:27.00px;top:925.16px;width:18.20px;height:1.00px;background:#e2e0dd;"></div>
<div class="b" style="left:50.20px;top:909.98px;width:352.80px;height:16.18px;background:#a8bed3;"></div>
<svg style="left:58.10px;top:913.87px" width="10" height="10" viewBox="0 0 10 10"><circle cx="5" cy="5" r="4" fill="none" stroke="#5f6c77" stroke-width="0.900"/><path d="M3 5h4" stroke="#5f6c77" stroke-width="0.900"/></svg>
<svg style="left:73.00px;top:912.07px" width="11" height="11" viewBox="0 0 11 11"><rect x="0.300" y="0.300" width="6.500" height="6.500" fill="#575d64"/><rect x="3" y="3" width="7.700" height="7.700" fill="#575d64" stroke="#a9c0d4" stroke-width="0.800"/></svg>
<span class="t" style="left:87.00px;top:910.87px;font-size:9.87px;letter-spacing:0.006px;color:#566370;line-height:14px;">05-Delivery and Commissioning</span>
<div class="b" style="left:27.00px;top:941.34px;width:18.20px;height:1.00px;background:#e2e0dd;"></div>
<div class="b" style="left:56.00px;top:941.34px;width:347.00px;height:1.00px;background:#e2e0dd;"></div>
<div class="b" style="left:144.00px;top:926.16px;width:1.00px;height:16.18px;background:#e2e0dd;"></div>
<div class="b" style="left:78.70px;top:930.65px;width:10.40px;height:5.20px;background:#5a5a5a;border-radius:1px;"></div>
<span class="t" style="left:93.00px;top:927.05px;font-size:9.87px;letter-spacing:0.112px;color:#3b3b3b;line-height:14px;">A1220</span>
<span class="t" style="left:149.60px;top:927.05px;font-size:9.87px;letter-spacing:-0.101px;color:#3b3b3b;line-height:14px;">Official Opening Ceremony</span>
<div class="b" style="left:27.00px;top:957.52px;width:18.20px;height:1.00px;background:#e2e0dd;"></div>
<div class="b" style="left:56.00px;top:957.52px;width:347.00px;height:1.00px;background:#e2e0dd;"></div>
<div class="b" style="left:144.00px;top:942.34px;width:1.00px;height:16.18px;background:#e2e0dd;"></div>
<div class="b" style="left:78.70px;top:946.83px;width:10.40px;height:5.20px;background:#5a5a5a;border-radius:1px;"></div>
<span class="t" style="left:93.00px;top:943.23px;font-size:9.87px;letter-spacing:0.112px;color:#3b3b3b;line-height:14px;">A1200</span>
<span class="t" style="left:149.60px;top:943.23px;font-size:9.87px;letter-spacing:-0.075px;color:#3b3b3b;line-height:14px;">System Testing</span>
<div class="b" style="left:27.00px;top:973.70px;width:18.20px;height:1.00px;background:#e2e0dd;"></div>
<div class="b" style="left:56.00px;top:973.70px;width:347.00px;height:1.00px;background:#e2e0dd;"></div>
<div class="b" style="left:144.00px;top:958.52px;width:1.00px;height:16.18px;background:#e2e0dd;"></div>
<div class="b" style="left:78.70px;top:963.01px;width:10.40px;height:5.20px;background:#5a5a5a;border-radius:1px;"></div>
<span class="t" style="left:93.00px;top:959.41px;font-size:9.87px;letter-spacing:0.258px;color:#3b3b3b;line-height:14px;">A1190</span>
<span class="t" style="left:149.60px;top:959.41px;font-size:9.87px;letter-spacing:-0.092px;color:#3b3b3b;line-height:14px;">Final Inspections</span>
<div class="b" style="left:27.00px;top:989.88px;width:18.20px;height:1.00px;background:#e2e0dd;"></div>
<div class="b" style="left:56.00px;top:989.88px;width:347.00px;height:1.00px;background:#e2e0dd;"></div>
<div class="b" style="left:144.00px;top:974.70px;width:1.00px;height:16.18px;background:#e2e0dd;"></div>
<div class="b" style="left:78.70px;top:979.19px;width:10.40px;height:5.20px;background:#5a5a5a;border-radius:1px;"></div>
<span class="t" style="left:93.00px;top:975.59px;font-size:9.87px;letter-spacing:0.112px;color:#3b3b3b;line-height:14px;">A1210</span>
<span class="t" style="left:149.60px;top:975.59px;font-size:9.87px;letter-spacing:-0.071px;color:#3b3b3b;line-height:14px;">Training for Users Aram Academy</span>
<div class="b" style="left:27.00px;top:1006.06px;width:18.20px;height:1.00px;background:#e2e0dd;"></div>
<div class="b" style="left:50.20px;top:990.88px;width:352.80px;height:16.18px;background:#a8bed3;"></div>
<svg style="left:73.00px;top:992.97px" width="11" height="11" viewBox="0 0 11 11"><rect x="0.300" y="0.300" width="6.500" height="6.500" fill="#575d64"/><rect x="3" y="3" width="7.700" height="7.700" fill="#575d64" stroke="#a9c0d4" stroke-width="0.800"/></svg>
<span class="t" style="left:87.00px;top:991.77px;font-size:9.87px;letter-spacing:0.118px;color:#566370;line-height:14px;">09-Coordination</span>
<div class="b" style="left:47.00px;top:1039.30px;width:198.00px;height:5.70px;background:#999;border-radius:3px;"></div>
<div class="b" style="left:27.00px;top:1047.00px;width:366.50px;height:1.00px;background:#d5d3d0;"></div>
<span class="t" style="left:45.30px;top:1051.50px;font-size:9.40px;letter-spacing:-0.171px;color:#333;line-height:14px;">Total: 24</span>
<div class="b" style="left:87.20px;top:1051.00px;width:1.00px;height:16.00px;background:#d5d3d0;"></div>
<svg style="left:97px;top:1052px" width="12" height="11" viewBox="0 0 12 11"><path d="M0.600 5.500C2 2.800 4 1.600 6 1.600s4 1.200 5.400 3.900C10 8.200 8 9.400 6 9.400S2 8.200 0.600 5.500z" fill="none" stroke="#555" stroke-width="0.900"/><circle cx="6" cy="5.500" r="2" fill="none" stroke="#555" stroke-width="0.900"/></svg>
<span class="t" style="left:115.40px;top:1051.50px;font-size:9.40px;letter-spacing:-0.182px;color:#333;line-height:14px;">Hide empty groups</span>
<svg style="left:0;top:0" width="1918" height="1078" viewBox="0 0 1918 1078" font-family="Liberation Sans, sans-serif"><defs><pattern id="hat" width="3.95" height="3.95" patternUnits="userSpaceOnUse" patternTransform="rotate(-45)"><rect width="3.95" height="3.95" fill="#fcfaff"/><rect x="0" y="0" width="0.9" height="3.95" fill="#b7abd8"/></pattern></defs><path d="M487.0 965.60H1513.2" stroke="#eeeeee" stroke-width="1"/><path d="M487.0 929.83H1513.2" stroke="#eeeeee" stroke-width="1"/><path d="M487.0 894.06H1513.2" stroke="#eeeeee" stroke-width="1"/><path d="M487.0 858.29H1513.2" stroke="#eeeeee" stroke-width="1"/><path d="M487.0 822.52H1513.2" stroke="#eeeeee" stroke-width="1"/><path d="M487.0 786.75H1513.2" stroke="#eeeeee" stroke-width="1"/><path d="M487.0 750.98H1513.2" stroke="#eeeeee" stroke-width="1"/><path d="M487.0 715.21H1513.2" stroke="#eeeeee" stroke-width="1"/><path d="M487.0 679.44H1513.2" stroke="#eeeeee" stroke-width="1"/><path d="M487.0 643.67H1513.2" stroke="#eeeeee" stroke-width="1"/><path d="M487.0 607.90H1513.2" stroke="#eeeeee" stroke-width="1"/><path d="M487.0 572.13H1513.2" stroke="#eeeeee" stroke-width="1"/><path d="M487.0 536.36H1513.2" stroke="#eeeeee" stroke-width="1"/><path d="M487.0 500.59H1513.2" stroke="#eeeeee" stroke-width="1"/><path d="M487.0 464.82H1513.2" stroke="#eeeeee" stroke-width="1"/><path d="M487.0 429.05H1513.2" stroke="#eeeeee" stroke-width="1"/><path d="M487.0 393.28H1513.2" stroke="#eeeeee" stroke-width="1"/><path d="M487.0 357.51H1513.2" stroke="#eeeeee" stroke-width="1"/><path d="M487.0 321.74H1513.2" stroke="#eeeeee" stroke-width="1"/><path d="M487.0 285.97H1513.2" stroke="#eeeeee" stroke-width="1"/><path d="M487.0 250.20H1513.2" stroke="#eeeeee" stroke-width="1"/><rect x="621.25" y="436.20" width="21.51" height="529.40" fill="#a083cf" stroke="#b8a3dd" stroke-width="0.8"/><rect x="643.56" y="765.29" width="21.51" height="200.31" fill="#a083cf" stroke="#b8a3dd" stroke-width="0.8"/><rect x="665.87" y="786.75" width="21.51" height="178.85" fill="#a083cf" stroke="#b8a3dd" stroke-width="0.8"/><rect x="688.18" y="729.52" width="21.51" height="236.08" fill="#a083cf" stroke="#b8a3dd" stroke-width="0.8"/><rect x="710.49" y="665.13" width="21.51" height="300.47" fill="#a083cf" stroke="#b8a3dd" stroke-width="0.8"/><rect x="732.80" y="686.59" width="21.51" height="279.01" fill="#a083cf" stroke="#b8a3dd" stroke-width="0.8"/><rect x="755.10" y="672.29" width="21.51" height="293.31" fill="#a083cf" stroke="#b8a3dd" stroke-width="0.8"/><rect x="777.41" y="729.52" width="21.51" height="236.08" fill="#a083cf" stroke="#b8a3dd" stroke-width="0.8"/><rect x="799.72" y="851.14" width="21.51" height="114.46" fill="#a083cf" stroke="#b8a3dd" stroke-width="0.8"/><rect x="822.03" y="743.83" width="21.51" height="221.77" fill="#a083cf" stroke="#b8a3dd" stroke-width="0.8"/><rect x="844.34" y="700.90" width="21.51" height="264.70" fill="#a083cf" stroke="#b8a3dd" stroke-width="0.8"/><rect x="866.65" y="750.98" width="21.51" height="214.62" fill="#a083cf" stroke="#b8a3dd" stroke-width="0.8"/><rect x="888.96" y="672.29" width="21.51" height="293.31" fill="#a083cf" stroke="#b8a3dd" stroke-width="0.8"/><rect x="911.42" y="579.78" width="21.21" height="385.82" fill="url(#hat)" stroke="#b2a3d9" stroke-width="1.1"/><rect x="933.72" y="558.32" width="21.21" height="407.28" fill="url(#hat)" stroke="#b2a3d9" stroke-width="1.1"/><rect x="956.03" y="737.17" width="21.21" height="228.43" fill="url(#hat)" stroke="#b2a3d9" stroke-width="1.1"/><rect x="978.34" y="744.33" width="21.21" height="221.27" fill="url(#hat)" stroke="#b2a3d9" stroke-width="1.1"/><rect x="1000.65" y="765.79" width="21.21" height="199.81" fill="url(#hat)" stroke="#b2a3d9" stroke-width="1.1"/><rect x="1022.96" y="772.94" width="21.21" height="192.66" fill="url(#hat)" stroke="#b2a3d9" stroke-width="1.1"/><rect x="1045.27" y="830.17" width="21.21" height="135.43" fill="url(#hat)" stroke="#b2a3d9" stroke-width="1.1"/><rect x="1067.58" y="823.02" width="21.21" height="142.58" fill="url(#hat)" stroke="#b2a3d9" stroke-width="1.1"/><rect x="1089.88" y="873.10" width="21.21" height="92.50" fill="url(#hat)" stroke="#b2a3d9" stroke-width="1.1"/><rect x="1112.19" y="865.94" width="21.21" height="99.66" fill="url(#hat)" stroke="#b2a3d9" stroke-width="1.1"/><rect x="1134.50" y="758.63" width="21.21" height="206.97" fill="url(#hat)" stroke="#b2a3d9" stroke-width="1.1"/><rect x="1156.81" y="815.87" width="21.21" height="149.73" fill="url(#hat)" stroke="#b2a3d9" stroke-width="1.1"/><rect x="1179.12" y="865.94" width="21.21" height="99.66" fill="url(#hat)" stroke="#b2a3d9" stroke-width="1.1"/><rect x="1201.43" y="873.10" width="21.21" height="92.50" fill="url(#hat)" stroke="#b2a3d9" stroke-width="1.1"/><rect x="1223.74" y="880.25" width="21.21" height="85.35" fill="url(#hat)" stroke="#b2a3d9" stroke-width="1.1"/><rect x="1246.05" y="923.18" width="21.21" height="42.42" fill="url(#hat)" stroke="#b2a3d9" stroke-width="1.1"/><rect x="1268.35" y="908.87" width="21.21" height="56.73" fill="url(#hat)" stroke="#b2a3d9" stroke-width="1.1"/><rect x="1290.66" y="894.56" width="21.21" height="71.04" fill="url(#hat)" stroke="#b2a3d9" stroke-width="1.1"/><rect x="1312.97" y="908.87" width="21.21" height="56.73" fill="url(#hat)" stroke="#b2a3d9" stroke-width="1.1"/><rect x="1335.28" y="930.33" width="21.21" height="35.27" fill="url(#hat)" stroke="#b2a3d9" stroke-width="1.1"/><rect x="1357.59" y="958.95" width="21.21" height="6.65" fill="url(#hat)" stroke="#b2a3d9" stroke-width="1.1"/><rect x="1379.90" y="944.64" width="21.21" height="20.96" fill="url(#hat)" stroke="#b2a3d9" stroke-width="1.1"/><rect x="1402.21" y="958.95" width="21.21" height="6.65" fill="url(#hat)" stroke="#b2a3d9" stroke-width="1.1"/><rect x="1424.52" y="951.79" width="21.21" height="13.81" fill="url(#hat)" stroke="#b2a3d9" stroke-width="1.1"/><rect x="1469.13" y="958.95" width="21.21" height="6.65" fill="url(#hat)" stroke="#b2a3d9" stroke-width="1.1"/><rect x="1491.44" y="958.95" width="21.21" height="6.65" fill="url(#hat)" stroke="#b2a3d9" stroke-width="1.1"/><path d="M487.0 250.2V965.6" stroke="#b0b0b0" stroke-width="1"/><path d="M1513.2 250.2V965.6" stroke="#b0b0b0" stroke-width="1"/><path d="M487.0 965.6H1513.2" stroke="#b0b0b0" stroke-width="1"/><path d="M626.6 250.2V965.6" stroke="#c97a20" stroke-width="3"/><path d="M920.4 250.2V965.6" stroke="#4a93b2" stroke-width="2.5"/><path d="M1174.1 250.2V965.6" stroke="#4a2a5e" stroke-width="2.2"/><path d="M508.51 965.60L530.82 965.60L553.13 965.60L575.43 965.60L597.74 965.60L620.05 965.60L642.36 906.78L664.67 884.52L686.98 864.65L709.29 838.42L731.60 805.03L753.90 774.03L776.21 741.44L798.52 715.21L820.83 702.49L843.14 677.85L865.45 648.44L887.76 624.59L910.07 592.00L932.37 549.08L954.68 503.77L976.99 478.33L999.30 453.69L1021.61 431.43L1043.92 409.97L1066.23 394.87L1088.53 378.97L1110.84 368.64L1133.15 357.51L1155.46 334.46L1177.77 317.77L1200.08 306.64L1222.39 296.30L1244.70 286.76L1267.00 282.00L1289.31 275.64L1311.62 267.69L1333.93 261.33L1356.24 257.35L1378.55 256.56L1400.86 254.17L1423.17 253.38L1445.47 251.79L1467.78 251.79L1490.09 250.99L1512.40 250.20" fill="none" stroke="#4a2a5e" stroke-width="1.7" stroke-linejoin="round"/><circle cx="508.51" cy="965.60" r="3.35" fill="#4a2a5e" stroke="#fff" stroke-width="1"/><circle cx="530.82" cy="965.60" r="3.35" fill="#4a2a5e" stroke="#fff" stroke-width="1"/><circle cx="553.13" cy="965.60" r="3.35" fill="#4a2a5e" stroke="#fff" stroke-width="1"/><circle cx="575.43" cy="965.60" r="3.35" fill="#4a2a5e" stroke="#fff" stroke-width="1"/><circle cx="597.74" cy="965.60" r="3.35" fill="#4a2a5e" stroke="#fff" stroke-width="1"/><circle cx="620.05" cy="965.60" r="3.35" fill="#4a2a5e" stroke="#fff" stroke-width="1"/><circle cx="642.36" cy="906.78" r="3.35" fill="#4a2a5e" stroke="#fff" stroke-width="1"/><circle cx="664.67" cy="884.52" r="3.35" fill="#4a2a5e" stroke="#fff" stroke-width="1"/><circle cx="686.98" cy="864.65" r="3.35" fill="#4a2a5e" stroke="#fff" stroke-width="1"/><circle cx="709.29" cy="838.42" r="3.35" fill="#4a2a5e" stroke="#fff" stroke-width="1"/><circle cx="731.60" cy="805.03" r="3.35" fill="#4a2a5e" stroke="#fff" stroke-width="1"/><circle cx="753.90" cy="774.03" r="3.35" fill="#4a2a5e" stroke="#fff" stroke-width="1"/><circle cx="776.21" cy="741.44" r="3.35" fill="#4a2a5e" stroke="#fff" stroke-width="1"/><circle cx="798.52" cy="715.21" r="3.35" fill="#4a2a5e" stroke="#fff" stroke-width="1"/><circle cx="820.83" cy="702.49" r="3.35" fill="#4a2a5e" stroke="#fff" stroke-width="1"/><circle cx="843.14" cy="677.85" r="3.35" fill="#4a2a5e" stroke="#fff" stroke-width="1"/><circle cx="865.45" cy="648.44" r="3.35" fill="#4a2a5e" stroke="#fff" stroke-width="1"/><circle cx="887.76" cy="624.59" r="3.35" fill="#4a2a5e" stroke="#fff" stroke-width="1"/><circle cx="910.07" cy="592.00" r="3.35" fill="#4a2a5e" stroke="#fff" stroke-width="1"/><circle cx="932.37" cy="549.08" r="3.35" fill="#4a2a5e" stroke="#fff" stroke-width="1"/><circle cx="954.68" cy="503.77" r="3.35" fill="#4a2a5e" stroke="#fff" stroke-width="1"/><circle cx="976.99" cy="478.33" r="3.35" fill="#4a2a5e" stroke="#fff" stroke-width="1"/><circle cx="999.30" cy="453.69" r="3.35" fill="#4a2a5e" stroke="#fff" stroke-width="1"/><circle cx="1021.61" cy="431.43" r="3.35" fill="#4a2a5e" stroke="#fff" stroke-width="1"/><circle cx="1043.92" cy="409.97" r="3.35" fill="#4a2a5e" stroke="#fff" stroke-width="1"/><circle cx="1066.23" cy="394.87" r="3.35" fill="#4a2a5e" stroke="#fff" stroke-width="1"/><circle cx="1088.53" cy="378.97" r="3.35" fill="#4a2a5e" stroke="#fff" stroke-width="1"/><circle cx="1110.84" cy="368.64" r="3.35" fill="#4a2a5e" stroke="#fff" stroke-width="1"/><circle cx="1133.15" cy="357.51" r="3.35" fill="#4a2a5e" stroke="#fff" stroke-width="1"/><circle cx="1155.46" cy="334.46" r="3.35" fill="#4a2a5e" stroke="#fff" stroke-width="1"/><circle cx="1177.77" cy="317.77" r="3.35" fill="#4a2a5e" stroke="#fff" stroke-width="1"/><circle cx="1200.08" cy="306.64" r="3.35" fill="#4a2a5e" stroke="#fff" stroke-width="1"/><circle cx="1222.39" cy="296.30" r="3.35" fill="#4a2a5e" stroke="#fff" stroke-width="1"/><circle cx="1244.70" cy="286.76" r="3.35" fill="#4a2a5e" stroke="#fff" stroke-width="1"/><circle cx="1267.00" cy="282.00" r="3.35" fill="#4a2a5e" stroke="#fff" stroke-width="1"/><circle cx="1289.31" cy="275.64" r="3.35" fill="#4a2a5e" stroke="#fff" stroke-width="1"/><circle cx="1311.62" cy="267.69" r="3.35" fill="#4a2a5e" stroke="#fff" stroke-width="1"/><circle cx="1333.93" cy="261.33" r="3.35" fill="#4a2a5e" stroke="#fff" stroke-width="1"/><circle cx="1356.24" cy="257.35" r="3.35" fill="#4a2a5e" stroke="#fff" stroke-width="1"/><circle cx="1378.55" cy="256.56" r="3.35" fill="#4a2a5e" stroke="#fff" stroke-width="1"/><circle cx="1400.86" cy="254.17" r="3.35" fill="#4a2a5e" stroke="#fff" stroke-width="1"/><circle cx="1423.17" cy="253.38" r="3.35" fill="#4a2a5e" stroke="#fff" stroke-width="1"/><circle cx="1445.47" cy="251.79" r="3.35" fill="#4a2a5e" stroke="#fff" stroke-width="1"/><circle cx="1467.78" cy="251.79" r="3.35" fill="#4a2a5e" stroke="#fff" stroke-width="1"/><circle cx="1490.09" cy="250.99" r="3.35" fill="#4a2a5e" stroke="#fff" stroke-width="1"/><circle cx="1512.40" cy="250.20" r="3.35" fill="#4a2a5e" stroke="#fff" stroke-width="1"/></svg>
<span class="t" style="left:816.40px;top:188.85px;font-size:11.75px;letter-spacing:0.287px;color:#5b6770;line-height:16px;font-weight:bold;">Project: Rotterdam Boathouse Scope (no baseline) - Finish Date</span>
<div class="b" style="left:779.00px;top:225.00px;width:9.00px;height:9.00px;background:#a083cf;"></div>
<span class="t" style="left:793.40px;top:222.55px;font-size:9.87px;letter-spacing:-0.233px;color:#333;line-height:14px;">Pre-Response</span>
<div class="b" style="left:873.00px;top:228.00px;width:8.00px;height:2.00px;background:#4a2a5e;"></div>
<div class="b" style="left:874.40px;top:226.40px;width:5.20px;height:5.20px;background:#4a2a5e;border-radius:50%;"></div>
<span class="t" style="left:887.00px;top:222.55px;font-size:9.87px;letter-spacing:-0.097px;color:#333;line-height:14px;">Cumulative Frequency</span>
<div class="b" style="left:992.40px;top:228.00px;width:8.00px;height:2.00px;background:#c97a20;"></div>
<span class="t" style="left:1006.00px;top:222.55px;font-size:9.87px;letter-spacing:0.074px;color:#333;line-height:14px;">Deterministic</span>
<div class="b" style="left:1071.70px;top:228.00px;width:8.30px;height:2.00px;background:#4a93b2;"></div>
<span class="t" style="left:1086.50px;top:222.55px;font-size:9.87px;letter-spacing:-0.155px;color:#333;line-height:14px;">Target</span>
<div class="b" style="left:1133.00px;top:228.00px;width:8.00px;height:2.00px;background:#4a2a5e;"></div>
<span class="t" style="left:1147.40px;top:222.55px;font-size:9.87px;letter-spacing:-0.143px;color:#333;line-height:14px;">Pessimistic (P90)</span>
<span class="t" style="left:473.03px;top:957.75px;font-size:9.87px;letter-spacing:-0.117px;color:#333;line-height:14px;">0</span>
<span class="t" style="left:467.65px;top:814.67px;font-size:9.87px;letter-spacing:-0.117px;color:#333;line-height:14px;">20</span>
<span class="t" style="left:467.65px;top:671.59px;font-size:9.87px;letter-spacing:-0.117px;color:#333;line-height:14px;">40</span>
<span class="t" style="left:467.65px;top:528.51px;font-size:9.87px;letter-spacing:-0.117px;color:#333;line-height:14px;">60</span>
<span class="t" style="left:467.65px;top:385.43px;font-size:9.87px;letter-spacing:-0.117px;color:#333;line-height:14px;">80</span>
<span class="t" style="left:462.28px;top:242.35px;font-size:9.87px;letter-spacing:-0.117px;color:#333;line-height:14px;">100</span>
<span class="t" style="left:1531.96px;top:957.75px;font-size:9.40px;letter-spacing:-0.072px;color:#333;line-height:14px;">0%</span>
<span class="t" style="left:1531.96px;top:921.98px;font-size:9.40px;letter-spacing:-0.072px;color:#333;line-height:14px;">5%</span>
<span class="t" style="left:1526.79px;top:886.21px;font-size:9.40px;letter-spacing:-0.067px;color:#333;line-height:14px;">10%</span>
<span class="t" style="left:1526.79px;top:850.44px;font-size:9.40px;letter-spacing:-0.067px;color:#333;line-height:14px;">15%</span>
<span class="t" style="left:1526.79px;top:814.67px;font-size:9.40px;letter-spacing:-0.067px;color:#333;line-height:14px;">20%</span>
<span class="t" style="left:1526.79px;top:778.90px;font-size:9.40px;letter-spacing:-0.067px;color:#333;line-height:14px;">25%</span>
<span class="t" style="left:1526.79px;top:743.13px;font-size:9.40px;letter-spacing:-0.067px;color:#333;line-height:14px;">30%</span>
<span class="t" style="left:1526.79px;top:707.36px;font-size:9.40px;letter-spacing:-0.067px;color:#333;line-height:14px;">35%</span>
<span class="t" style="left:1526.79px;top:671.59px;font-size:9.40px;letter-spacing:-0.067px;color:#333;line-height:14px;">40%</span>
<span class="t" style="left:1526.79px;top:635.82px;font-size:9.40px;letter-spacing:-0.067px;color:#333;line-height:14px;">45%</span>
<span class="t" style="left:1526.79px;top:600.05px;font-size:9.40px;letter-spacing:-0.067px;color:#333;line-height:14px;">50%</span>
<span class="t" style="left:1526.79px;top:564.28px;font-size:9.40px;letter-spacing:-0.067px;color:#333;line-height:14px;">55%</span>
<span class="t" style="left:1526.79px;top:528.51px;font-size:9.40px;letter-spacing:-0.067px;color:#333;line-height:14px;">60%</span>
<span class="t" style="left:1526.79px;top:492.74px;font-size:9.40px;letter-spacing:-0.067px;color:#333;line-height:14px;">65%</span>
<span class="t" style="left:1526.79px;top:456.97px;font-size:9.40px;letter-spacing:-0.067px;color:#333;line-height:14px;">70%</span>
<span class="t" style="left:1526.79px;top:421.20px;font-size:9.40px;letter-spacing:-0.067px;color:#333;line-height:14px;">75%</span>
<span class="t" style="left:1526.79px;top:385.43px;font-size:9.40px;letter-spacing:-0.067px;color:#333;line-height:14px;">80%</span>
<span class="t" style="left:1526.79px;top:349.66px;font-size:9.40px;letter-spacing:-0.067px;color:#333;line-height:14px;">85%</span>
<span class="t" style="left:1526.79px;top:313.89px;font-size:9.40px;letter-spacing:-0.067px;color:#333;line-height:14px;">90%</span>
<span class="t" style="left:1526.79px;top:278.12px;font-size:9.40px;letter-spacing:-0.067px;color:#333;line-height:14px;">95%</span>
<span class="t" style="left:1521.61px;top:242.35px;font-size:9.40px;letter-spacing:-0.064px;color:#333;line-height:14px;">100%</span>
<span class="t" style="left:452.20px;top:607.90px;width:49.50px;height:14px;line-height:14px;font-size:9.96px;letter-spacing:0.047px;color:#333;transform:translate(-50%,-50%) rotate(-90deg);text-align:center;">Frequency</span>
<span class="t" style="left:1555.50px;top:607.80px;width:115.00px;height:14px;line-height:14px;font-size:8.93px;letter-spacing:0.304px;color:#333;transform:translate(-50%,-50%) rotate(-90deg);text-align:center;">Cumulative Frequency (%)</span>
<span class="t" style="left:497.25px;top:973.8px;height:14px;line-height:14px;font-size:9.9px;letter-spacing:-0.238px;color:#333;transform-origin:100% 50%;transform:translate(-100%,-50%) rotate(-90deg);">Week of 17-Sep-2028</span>
<span class="t" style="left:519.56px;top:973.8px;height:14px;line-height:14px;font-size:9.9px;letter-spacing:-0.238px;color:#333;transform-origin:100% 50%;transform:translate(-100%,-50%) rotate(-90deg);">Week of 24-Sep-2028</span>
<span class="t" style="left:541.87px;top:973.8px;height:14px;line-height:14px;font-size:9.9px;letter-spacing:-0.231px;color:#333;transform-origin:100% 50%;transform:translate(-100%,-50%) rotate(-90deg);">Week of 1-Oct-2028</span>
<span class="t" style="left:564.18px;top:973.8px;height:14px;line-height:14px;font-size:9.9px;letter-spacing:-0.231px;color:#333;transform-origin:100% 50%;transform:translate(-100%,-50%) rotate(-90deg);">Week of 8-Oct-2028</span>
<span class="t" style="left:586.49px;top:973.8px;height:14px;line-height:14px;font-size:9.9px;letter-spacing:-0.232px;color:#333;transform-origin:100% 50%;transform:translate(-100%,-50%) rotate(-90deg);">Week of 15-Oct-2028</span>
<span class="t" style="left:608.80px;top:973.8px;height:14px;line-height:14px;font-size:9.9px;letter-spacing:-0.232px;color:#333;transform-origin:100% 50%;transform:translate(-100%,-50%) rotate(-90deg);">Week of 22-Oct-2028</span>
<span class="t" style="left:631.11px;top:973.8px;height:14px;line-height:14px;font-size:9.9px;letter-spacing:-0.232px;color:#333;transform-origin:100% 50%;transform:translate(-100%,-50%) rotate(-90deg);">Week of 29-Oct-2028</span>
<span class="t" style="left:653.42px;top:973.8px;height:14px;line-height:14px;font-size:9.9px;letter-spacing:-0.236px;color:#333;transform-origin:100% 50%;transform:translate(-100%,-50%) rotate(-90deg);">Week of 5-Nov-2028</span>
<span class="t" style="left:675.72px;top:973.8px;height:14px;line-height:14px;font-size:9.9px;letter-spacing:-0.238px;color:#333;transform-origin:100% 50%;transform:translate(-100%,-50%) rotate(-90deg);">Week of 12-Nov-2028</span>
<span class="t" style="left:698.03px;top:973.8px;height:14px;line-height:14px;font-size:9.9px;letter-spacing:-0.238px;color:#333;transform-origin:100% 50%;transform:translate(-100%,-50%) rotate(-90deg);">Week of 19-Nov-2028</span>
<span class="t" style="left:720.34px;top:973.8px;height:14px;line-height:14px;font-size:9.9px;letter-spacing:-0.238px;color:#333;transform-origin:100% 50%;transform:translate(-100%,-50%) rotate(-90deg);">Week of 26-Nov-2028</span>
<span class="t" style="left:742.65px;top:973.8px;height:14px;line-height:14px;font-size:9.9px;letter-spacing:-0.236px;color:#333;transform-origin:100% 50%;transform:translate(-100%,-50%) rotate(-90deg);">Week of 3-Dec-2028</span>
<span class="t" style="left:764.96px;top:973.8px;height:14px;line-height:14px;font-size:9.9px;letter-spacing:-0.238px;color:#333;transform-origin:100% 50%;transform:translate(-100%,-50%) rotate(-90deg);">Week of 10-Dec-2028</span>
<span class="t" style="left:787.27px;top:973.8px;height:14px;line-height:14px;font-size:9.9px;letter-spacing:-0.238px;color:#333;transform-origin:100% 50%;transform:translate(-100%,-50%) rotate(-90deg);">Week of 17-Dec-2028</span>
<span class="t" style="left:809.58px;top:973.8px;height:14px;line-height:14px;font-size:9.9px;letter-spacing:-0.238px;color:#333;transform-origin:100% 50%;transform:translate(-100%,-50%) rotate(-90deg);">Week of 24-Dec-2028</span>
<span class="t" style="left:831.88px;top:973.8px;height:14px;line-height:14px;font-size:9.9px;letter-spacing:-0.238px;color:#333;transform-origin:100% 50%;transform:translate(-100%,-50%) rotate(-90deg);">Week of 31-Dec-2028</span>
<span class="t" style="left:854.19px;top:973.8px;height:14px;line-height:14px;font-size:9.9px;letter-spacing:-0.232px;color:#333;transform-origin:100% 50%;transform:translate(-100%,-50%) rotate(-90deg);">Week of 7-Jan-2029</span>
<span class="t" style="left:876.50px;top:973.8px;height:14px;line-height:14px;font-size:9.9px;letter-spacing:-0.234px;color:#333;transform-origin:100% 50%;transform:translate(-100%,-50%) rotate(-90deg);">Week of 14-Jan-2029</span>
<span class="t" style="left:898.81px;top:973.8px;height:14px;line-height:14px;font-size:9.9px;letter-spacing:-0.234px;color:#333;transform-origin:100% 50%;transform:translate(-100%,-50%) rotate(-90deg);">Week of 21-Jan-2029</span>
<span class="t" style="left:921.12px;top:973.8px;height:14px;line-height:14px;font-size:9.9px;letter-spacing:-0.234px;color:#333;transform-origin:100% 50%;transform:translate(-100%,-50%) rotate(-90deg);">Week of 28-Jan-2029</span>
<span class="t" style="left:943.43px;top:973.8px;height:14px;line-height:14px;font-size:9.9px;letter-spacing:-0.235px;color:#333;transform-origin:100% 50%;transform:translate(-100%,-50%) rotate(-90deg);">Week of 4-Feb-2029</span>
<span class="t" style="left:965.74px;top:973.8px;height:14px;line-height:14px;font-size:9.9px;letter-spacing:-0.234px;color:#333;transform-origin:100% 50%;transform:translate(-100%,-50%) rotate(-90deg);">Week of 11-Feb-2029</span>
<span class="t" style="left:988.05px;top:973.8px;height:14px;line-height:14px;font-size:9.9px;letter-spacing:-0.236px;color:#333;transform-origin:100% 50%;transform:translate(-100%,-50%) rotate(-90deg);">Week of 18-Feb-2029</span>
<span class="t" style="left:1010.35px;top:973.8px;height:14px;line-height:14px;font-size:9.9px;letter-spacing:-0.236px;color:#333;transform-origin:100% 50%;transform:translate(-100%,-50%) rotate(-90deg);">Week of 25-Feb-2029</span>
<span class="t" style="left:1032.66px;top:973.8px;height:14px;line-height:14px;font-size:9.9px;letter-spacing:-0.235px;color:#333;transform-origin:100% 50%;transform:translate(-100%,-50%) rotate(-90deg);">Week of 4-Mar-2029</span>
<span class="t" style="left:1054.97px;top:973.8px;height:14px;line-height:14px;font-size:9.9px;letter-spacing:-0.234px;color:#333;transform-origin:100% 50%;transform:translate(-100%,-50%) rotate(-90deg);">Week of 11-Mar-2029</span>
<span class="t" style="left:1077.28px;top:973.8px;height:14px;line-height:14px;font-size:9.9px;letter-spacing:-0.236px;color:#333;transform-origin:100% 50%;transform:translate(-100%,-50%) rotate(-90deg);">Week of 18-Mar-2029</span>
<span class="t" style="left:1099.59px;top:973.8px;height:14px;line-height:14px;font-size:9.9px;letter-spacing:-0.236px;color:#333;transform-origin:100% 50%;transform:translate(-100%,-50%) rotate(-90deg);">Week of 25-Mar-2029</span>
<span class="t" style="left:1121.90px;top:973.8px;height:14px;line-height:14px;font-size:9.9px;letter-spacing:-0.231px;color:#333;transform-origin:100% 50%;transform:translate(-100%,-50%) rotate(-90deg);">Week of 1-Apr-2029</span>
<span class="t" style="left:1144.21px;top:973.8px;height:14px;line-height:14px;font-size:9.9px;letter-spacing:-0.231px;color:#333;transform-origin:100% 50%;transform:translate(-100%,-50%) rotate(-90deg);">Week of 8-Apr-2029</span>
<span class="t" style="left:1166.52px;top:973.8px;height:14px;line-height:14px;font-size:9.9px;letter-spacing:-0.232px;color:#333;transform-origin:100% 50%;transform:translate(-100%,-50%) rotate(-90deg);">Week of 15-Apr-2029</span>
<span class="t" style="left:1188.82px;top:973.8px;height:14px;line-height:14px;font-size:9.9px;letter-spacing:-0.232px;color:#333;transform-origin:100% 50%;transform:translate(-100%,-50%) rotate(-90deg);">Week of 22-Apr-2029</span>
<span class="t" style="left:1211.13px;top:973.8px;height:14px;line-height:14px;font-size:9.9px;letter-spacing:-0.232px;color:#333;transform-origin:100% 50%;transform:translate(-100%,-50%) rotate(-90deg);">Week of 29-Apr-2029</span>
<span class="t" style="left:1233.44px;top:973.8px;height:14px;line-height:14px;font-size:9.9px;letter-spacing:-0.239px;color:#333;transform-origin:100% 50%;transform:translate(-100%,-50%) rotate(-90deg);">Week of 6-May-2029</span>
<span class="t" style="left:1255.75px;top:973.8px;height:14px;line-height:14px;font-size:9.9px;letter-spacing:-0.240px;color:#333;transform-origin:100% 50%;transform:translate(-100%,-50%) rotate(-90deg);">Week of 13-May-2029</span>
<span class="t" style="left:1278.06px;top:973.8px;height:14px;line-height:14px;font-size:9.9px;letter-spacing:-0.240px;color:#333;transform-origin:100% 50%;transform:translate(-100%,-50%) rotate(-90deg);">Week of 20-May-2029</span>
<span class="t" style="left:1300.37px;top:973.8px;height:14px;line-height:14px;font-size:9.9px;letter-spacing:-0.240px;color:#333;transform-origin:100% 50%;transform:translate(-100%,-50%) rotate(-90deg);">Week of 27-May-2029</span>
<span class="t" style="left:1322.68px;top:973.8px;height:14px;line-height:14px;font-size:9.9px;letter-spacing:-0.232px;color:#333;transform-origin:100% 50%;transform:translate(-100%,-50%) rotate(-90deg);">Week of 3-Jun-2029</span>
<span class="t" style="left:1344.98px;top:973.8px;height:14px;line-height:14px;font-size:9.9px;letter-spacing:-0.234px;color:#333;transform-origin:100% 50%;transform:translate(-100%,-50%) rotate(-90deg);">Week of 10-Jun-2029</span>
<span class="t" style="left:1367.29px;top:973.8px;height:14px;line-height:14px;font-size:9.9px;letter-spacing:-0.234px;color:#333;transform-origin:100% 50%;transform:translate(-100%,-50%) rotate(-90deg);">Week of 17-Jun-2029</span>
<span class="t" style="left:1389.60px;top:973.8px;height:14px;line-height:14px;font-size:9.9px;letter-spacing:-0.234px;color:#333;transform-origin:100% 50%;transform:translate(-100%,-50%) rotate(-90deg);">Week of 24-Jun-2029</span>
<span class="t" style="left:1411.91px;top:973.8px;height:14px;line-height:14px;font-size:9.9px;letter-spacing:-0.224px;color:#333;transform-origin:100% 50%;transform:translate(-100%,-50%) rotate(-90deg);">Week of 1-Jul-2029</span>
<span class="t" style="left:1434.22px;top:973.8px;height:14px;line-height:14px;font-size:9.9px;letter-spacing:-0.224px;color:#333;transform-origin:100% 50%;transform:translate(-100%,-50%) rotate(-90deg);">Week of 8-Jul-2029</span>
<span class="t" style="left:1456.53px;top:973.8px;height:14px;line-height:14px;font-size:9.9px;letter-spacing:-0.225px;color:#333;transform-origin:100% 50%;transform:translate(-100%,-50%) rotate(-90deg);">Week of 15-Jul-2029</span>
<span class="t" style="left:1478.84px;top:973.8px;height:14px;line-height:14px;font-size:9.9px;letter-spacing:-0.225px;color:#333;transform-origin:100% 50%;transform:translate(-100%,-50%) rotate(-90deg);">Week of 22-Jul-2029</span>
<span class="t" style="left:1501.15px;top:973.8px;height:14px;line-height:14px;font-size:9.9px;letter-spacing:-0.225px;color:#333;transform-origin:100% 50%;transform:translate(-100%,-50%) rotate(-90deg);">Week of 29-Jul-2029</span>
<span class="t" style="left:868.40px;top:326.55px;font-size:13.16px;letter-spacing:0.661px;color:#4a8cae;line-height:18px;-webkit-text-stroke:0.35px #4a8cae;">54,56%</span>
<span class="t" style="left:880.00px;top:365.45px;font-size:9.40px;letter-spacing:0.211px;color:#4a8cae;line-height:14px;">On Time</span>
<div class="b" style="left:1582.20px;top:180.00px;width:1.00px;height:898.00px;background:#d5d3d0;"></div>
<svg style="left:1573.100px;top:621.400px" width="19" height="19" viewBox="0 0 19 19"><circle cx="9.500" cy="9.500" r="8.500" fill="#fff" stroke="#a3a09d" stroke-width="1"/><path d="M8.300 6.600L11.300 9.700L8.300 12.800" fill="none" stroke="#5a5754" stroke-width="1.300"/></svg>
<span class="t" style="left:1594.20px;top:181.55px;font-size:9.87px;letter-spacing:-0.227px;color:#333;line-height:14px;font-weight:bold;">Finish</span>
<div class="b" style="left:1594.20px;top:196.10px;width:309.80px;height:1.00px;background:#d5d3d0;"></div>
<span class="t" style="left:1598.30px;top:200.65px;font-size:9.87px;letter-spacing:0.035px;color:#333;line-height:14px;">Deterministic</span>
<span class="t" style="left:1753.20px;top:200.65px;font-size:9.87px;letter-spacing:0.221px;color:#333;line-height:14px;">30-Oct-2028</span>
<div class="b" style="left:1594.20px;top:216.80px;width:309.80px;height:1.00px;background:#d5d3d0;"></div>
<span class="t" style="left:1598.30px;top:220.55px;font-size:9.87px;letter-spacing:0.013px;color:#333;line-height:14px;">Deterministic Probability</span>
<span class="t" style="left:1753.20px;top:220.55px;font-size:9.87px;letter-spacing:-0.117px;color:#333;line-height:14px;">5,56%</span>
<div class="b" style="left:1594.20px;top:236.70px;width:309.80px;height:1.00px;background:#d5d3d0;"></div>
<span class="t" style="left:1598.30px;top:240.65px;font-size:9.87px;letter-spacing:-0.089px;color:#333;line-height:14px;">Target</span>
<span class="t" style="left:1753.20px;top:240.65px;font-size:9.87px;letter-spacing:0.189px;color:#333;line-height:14px;">24-Jan-2029</span>
<div class="b" style="left:1594.20px;top:256.90px;width:309.80px;height:1.00px;background:#d5d3d0;"></div>
<span class="t" style="left:1598.30px;top:261.65px;font-size:9.87px;letter-spacing:-0.042px;color:#333;line-height:14px;">Target Probability</span>
<span class="t" style="left:1753.20px;top:261.65px;font-size:9.87px;letter-spacing:-0.113px;color:#333;line-height:14px;">49,00%</span>
<div class="b" style="left:1594.20px;top:276.80px;width:309.80px;height:1.00px;background:#d5d3d0;"></div>
<span class="t" style="left:1598.30px;top:281.55px;font-size:9.87px;letter-spacing:-0.000px;color:#333;line-height:14px;">Optimistic (P10)</span>
<span class="t" style="left:1753.20px;top:281.55px;font-size:9.87px;letter-spacing:0.223px;color:#333;line-height:14px;">8-Nov-2028</span>
<div class="b" style="left:1594.20px;top:296.70px;width:309.80px;height:1.00px;background:#d5d3d0;"></div>
<span class="t" style="left:1598.30px;top:301.45px;font-size:9.87px;letter-spacing:0.046px;color:#333;line-height:14px;">P50</span>
<span class="t" style="left:1753.20px;top:301.45px;font-size:9.87px;letter-spacing:0.189px;color:#333;line-height:14px;">25-Jan-2029</span>
<div class="b" style="left:1594.20px;top:316.80px;width:309.80px;height:1.00px;background:#d5d3d0;"></div>
<span class="t" style="left:1598.30px;top:321.35px;font-size:9.87px;letter-spacing:-0.137px;color:#333;line-height:14px;">Pessimistic (P90)</span>
<span class="t" style="left:1753.20px;top:321.35px;font-size:9.87px;letter-spacing:0.239px;color:#333;line-height:14px;">20-Apr-2029</span>
<div class="b" style="left:1594.20px;top:337.50px;width:309.80px;height:1.00px;background:#d5d3d0;"></div>
<span class="t" style="left:1598.30px;top:341.45px;font-size:9.87px;letter-spacing:-0.094px;color:#333;line-height:14px;">Pessimistic Contingency</span>
<span class="t" style="left:1753.20px;top:341.45px;font-size:9.87px;letter-spacing:0.161px;color:#333;line-height:14px;">123d</span>
<div class="b" style="left:1594.20px;top:357.70px;width:309.80px;height:1.00px;background:#d5d3d0;"></div>
<span class="t" style="left:1598.30px;top:361.65px;font-size:9.87px;letter-spacing:0.267px;color:#333;line-height:14px;">Minimum</span>
<span class="t" style="left:1753.20px;top:361.65px;font-size:9.87px;letter-spacing:0.221px;color:#333;line-height:14px;">30-Oct-2028</span>
<div class="b" style="left:1594.20px;top:377.80px;width:309.80px;height:1.00px;background:#d5d3d0;"></div>
<span class="t" style="left:1598.30px;top:382.35px;font-size:9.87px;letter-spacing:0.147px;color:#333;line-height:14px;">Maximum</span>
<span class="t" style="left:1753.20px;top:382.35px;font-size:9.87px;letter-spacing:0.242px;color:#333;line-height:14px;">1-Aug-2029</span>
<div class="b" style="left:1594.20px;top:398.00px;width:309.80px;height:1.00px;background:#d5d3d0;"></div>
<span class="t" style="left:1598.30px;top:402.45px;font-size:9.87px;letter-spacing:-0.048px;color:#333;line-height:14px;">Mean</span>
<span class="t" style="left:1753.20px;top:402.45px;font-size:9.87px;letter-spacing:0.189px;color:#333;line-height:14px;">26-Jan-2029</span>
<div class="b" style="left:1594.20px;top:417.90px;width:309.80px;height:1.00px;background:#d5d3d0;"></div>
<span class="t" style="left:1598.30px;top:422.35px;font-size:9.87px;letter-spacing:-0.064px;color:#333;line-height:14px;">Standard Deviation</span>
<span class="t" style="left:1753.20px;top:422.35px;font-size:9.87px;letter-spacing:0.068px;color:#333;line-height:14px;">341,79</span>
<div class="b" style="left:1594.20px;top:438.30px;width:309.80px;height:1.00px;background:#d5d3d0;"></div>
<span class="t" style="left:1598.30px;top:442.25px;font-size:9.87px;letter-spacing:-0.092px;color:#333;line-height:14px;">Bar Width</span>
<span class="t" style="left:1753.20px;top:442.25px;font-size:9.87px;letter-spacing:-0.413px;color:#333;line-height:14px;">Week</span>
<span class="t" style="left:1598.30px;top:477.55px;font-size:9.87px;letter-spacing:-0.259px;color:#333;line-height:14px;font-weight:bold;">Risk Analysis Run Settings</span>
<div class="b" style="left:1594.20px;top:493.80px;width:309.80px;height:1.00px;background:#d5d3d0;"></div>
<span class="t" style="left:1598.30px;top:498.55px;font-size:9.87px;letter-spacing:0.000px;color:#333;line-height:14px;">Iterations</span>
<span class="t" style="left:1753.20px;top:498.55px;font-size:9.87px;letter-spacing:0.177px;color:#333;line-height:14px;">900</span>
<div class="b" style="left:1594.20px;top:513.70px;width:309.80px;height:1.00px;background:#d5d3d0;"></div>
<span class="t" style="left:1598.30px;top:518.75px;font-size:9.87px;letter-spacing:-0.067px;color:#333;line-height:14px;">Converged At Iterations</span>
<span class="t" style="left:1753.20px;top:518.75px;font-size:9.87px;letter-spacing:0.177px;color:#333;line-height:14px;">150</span>
<div class="b" style="left:1594.20px;top:533.90px;width:309.80px;height:1.00px;background:#d5d3d0;"></div>
<span class="t" style="left:1598.30px;top:538.65px;font-size:9.87px;letter-spacing:-0.123px;color:#333;line-height:14px;">Include Proposed Items</span>
<span class="t" style="left:1753.20px;top:538.65px;font-size:9.87px;letter-spacing:0.072px;color:#333;line-height:14px;">Off</span>
<div class="b" style="left:1594.20px;top:554.80px;width:309.80px;height:1.00px;background:#d5d3d0;"></div>
<span class="t" style="left:1598.30px;top:558.55px;font-size:9.87px;letter-spacing:-0.223px;color:#333;line-height:14px;">Schedule Cost</span>
<span class="t" style="left:1753.20px;top:558.55px;font-size:9.87px;letter-spacing:0.072px;color:#333;line-height:14px;">Off</span>
<div class="b" style="left:1594.20px;top:574.70px;width:309.80px;height:1.00px;background:#d5d3d0;"></div>
<span class="t" style="left:1598.30px;top:578.65px;font-size:9.87px;letter-spacing:-0.086px;color:#333;line-height:14px;">Risk Analysis Start Time</span>
<span class="t" style="left:1753.20px;top:578.65px;font-size:9.87px;letter-spacing:0.193px;color:#333;line-height:14px;">3-Nov-2025</span>
<div class="b" style="left:1594.20px;top:594.60px;width:309.80px;height:1.00px;background:#d5d3d0;"></div>
<span class="t" style="left:1598.30px;top:599.35px;font-size:9.87px;letter-spacing:-0.110px;color:#333;line-height:14px;">Risk Analysis Finish Time</span>
<span class="t" style="left:1753.20px;top:599.35px;font-size:9.87px;letter-spacing:0.193px;color:#333;line-height:14px;">3-Nov-2025</span>
<div class="b" style="left:1594.20px;top:614.80px;width:309.80px;height:1.00px;background:#d5d3d0;"></div>
<span class="t" style="left:1598.30px;top:619.25px;font-size:9.87px;letter-spacing:-0.100px;color:#333;line-height:14px;">Risk Analysis Duration</span>
<span class="t" style="left:1753.20px;top:619.25px;font-size:9.87px;letter-spacing:-0.040px;color:#333;line-height:14px;">0d 0h</span>
</body></html>
